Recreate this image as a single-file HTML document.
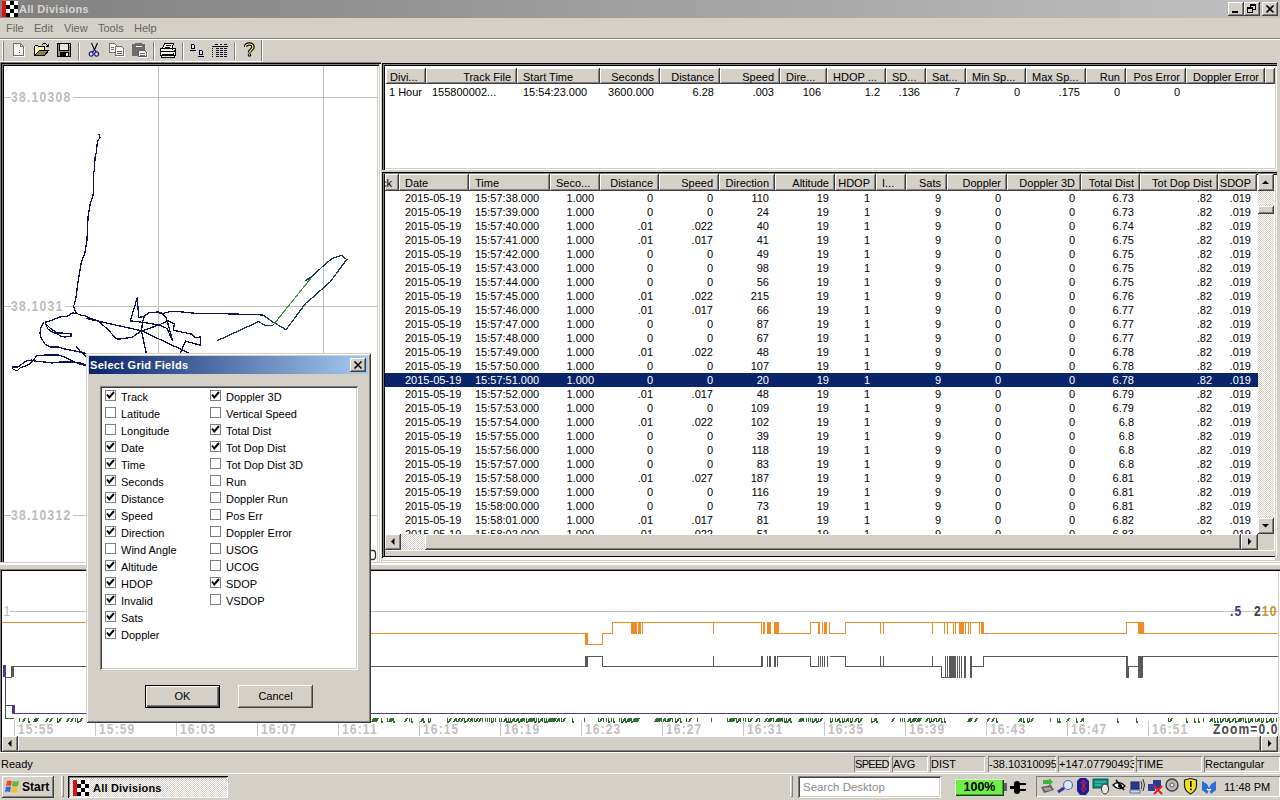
<!DOCTYPE html><html><head><meta charset="utf-8"><style>
html,body{margin:0;padding:0}
body{width:1280px;height:800px;position:relative;overflow:hidden;background:#d4d0c8;font-family:"Liberation Sans",sans-serif;font-size:11px;color:#000}
div{position:absolute;box-sizing:border-box}
.t{white-space:nowrap}
svg{position:absolute}
</style></head><body>
<div style="left:0px;top:0px;width:1280px;height:18px;background:linear-gradient(90deg,#808080,#c0c0c0);"></div>
<div style="left:2px;top:1px;width:4px;height:16px;background:#e01010;"></div>
<div style="left:6px;top:1px;width:4px;height:4px;background:#fff;"></div>
<div style="left:10px;top:1px;width:4px;height:4px;background:#000;"></div>
<div style="left:14px;top:1px;width:4px;height:4px;background:#fff;"></div>
<div style="left:6px;top:5px;width:4px;height:4px;background:#000;"></div>
<div style="left:10px;top:5px;width:4px;height:4px;background:#fff;"></div>
<div style="left:14px;top:5px;width:4px;height:4px;background:#000;"></div>
<div style="left:6px;top:9px;width:4px;height:4px;background:#fff;"></div>
<div style="left:10px;top:9px;width:4px;height:4px;background:#000;"></div>
<div style="left:14px;top:9px;width:4px;height:4px;background:#fff;"></div>
<div style="left:6px;top:13px;width:4px;height:4px;background:#000;"></div>
<div style="left:10px;top:13px;width:4px;height:4px;background:#fff;"></div>
<div style="left:14px;top:13px;width:4px;height:4px;background:#000;"></div>
<div class="t" style="left:19px;top:3px;line-height:13px;font-size:11px;font-weight:bold;color:#d8d4cc;letter-spacing:0.3px;">All Divisions</div>
<div style="left:1228px;top:2px;width:16px;height:14px;background:#d4d0c8;box-shadow:inset -1px -1px #404040,inset 1px 1px #fff,inset -2px -2px #808080;"></div>
<div style="left:1244px;top:2px;width:16px;height:14px;background:#d4d0c8;box-shadow:inset -1px -1px #404040,inset 1px 1px #fff,inset -2px -2px #808080;"></div>
<div style="left:1262px;top:2px;width:16px;height:14px;background:#d4d0c8;box-shadow:inset -1px -1px #404040,inset 1px 1px #fff,inset -2px -2px #808080;"></div>
<div style="left:1232px;top:11px;width:6px;height:2px;background:#000;"></div>
<div style="left:1250px;top:4px;width:6px;height:6px;border:1px solid #000;border-top-width:2px;"></div>
<div style="left:1247px;top:7px;width:6px;height:6px;border:1px solid #000;border-top-width:2px;background:#d4d0c8;"></div>
<svg style="left:1262px;top:2px" width="16" height="14" viewBox="0 0 16 14"><path d="M4.5 3.5 L11.5 10.5 M11.5 3.5 L4.5 10.5" stroke="#000" stroke-width="1.6"/></svg>
<div class="t" style="left:6px;top:22px;line-height:13px;font-size:11px;color:#646464;">File</div>
<div class="t" style="left:34px;top:22px;line-height:13px;font-size:11px;color:#646464;">Edit</div>
<div class="t" style="left:64px;top:22px;line-height:13px;font-size:11px;color:#646464;">View</div>
<div class="t" style="left:98px;top:22px;line-height:13px;font-size:11px;color:#646464;">Tools</div>
<div class="t" style="left:134px;top:22px;line-height:13px;font-size:11px;color:#646464;">Help</div>
<div style="left:0px;top:38px;width:1280px;height:1px;background:#808080;"></div>
<div style="left:0px;top:39px;width:1280px;height:1px;background:#fff;"></div>
<div style="left:2px;top:41px;width:1px;height:20px;background:#fff;"></div>
<div style="left:3px;top:41px;width:1px;height:20px;background:#808080;"></div>
<div style="left:78px;top:42px;width:1px;height:18px;background:#808080;"></div>
<div style="left:79px;top:42px;width:1px;height:18px;background:#fff;"></div>
<div style="left:153px;top:42px;width:1px;height:18px;background:#808080;"></div>
<div style="left:154px;top:42px;width:1px;height:18px;background:#fff;"></div>
<div style="left:182px;top:42px;width:1px;height:18px;background:#808080;"></div>
<div style="left:183px;top:42px;width:1px;height:18px;background:#fff;"></div>
<div style="left:234px;top:42px;width:1px;height:18px;background:#808080;"></div>
<div style="left:235px;top:42px;width:1px;height:18px;background:#fff;"></div>
<div style="left:261px;top:40px;width:1px;height:22px;background:#808080;"></div>
<div style="left:262px;top:40px;width:1px;height:22px;background:#fff;"></div>
<div style="left:0px;top:61px;width:262px;height:1px;background:#fff;"></div>
<svg style="left:0;top:40px" width="270" height="22" viewBox="0 40 270 22" shape-rendering="crispEdges">
<!-- new doc (disabled) -->
<path d="M14.5 44.5 H21.5 L24.5 47.5 V56.5 H14.5 Z" fill="#fff" stroke="#fff"/>
<path d="M13.5 43.5 H20.5 L23.5 46.5 V55.5 H13.5 Z" fill="#f4f4f0" stroke="#707070"/>
<path d="M20.5 43.5 V46.5 H23.5" fill="none" stroke="#707070"/>
<rect x="21" y="45" width="1" height="1" fill="#fff"/>
<rect x="19" y="50" width="1" height="1" fill="#808080"/><rect x="19" y="52" width="1" height="1" fill="#606060"/>
<!-- open folder -->
<path d="M35 47 H44 V50 H39 L35 55 Z" fill="#ffffa8"/>
<path d="M35 47 H37 L35 52 Z" fill="#ffffe8"/>
<path d="M34.5 55.5 V46.5 L35.5 45.5 H37.5 L38.5 46.5 H44.5 V50.5" fill="none" stroke="#000"/>
<path d="M39.5 50.5 H48.5 L44.5 55.5 H34.5 Z" fill="#888048" stroke="#000"/>
<path d="M42.5 45 L43.5 43.5 H45.5 L47 45" fill="none" stroke="#000"/>
<path d="M46 46.5 H49 V43.5 Z" fill="#000"/>
<!-- save -->
<rect x="57.5" y="43.5" width="13" height="13" fill="#909070" stroke="#000"/>
<rect x="60" y="44" width="8" height="6" fill="#e8e8d8"/>
<path d="M59.5 44 V50.5 H68.5 V44" fill="none" stroke="#000"/>
<rect x="60" y="52" width="9" height="4" fill="#000"/>
<rect x="66" y="53" width="2" height="3" fill="#f0f0e8"/>
<rect x="69" y="44" width="1" height="1" fill="#fff"/>
<!-- scissors -->
<g shape-rendering="auto">
<path d="M91.5 43 L94.8 50.5 M97.5 43 L94.2 50.5" stroke="#000" stroke-width="1.1" fill="none"/>
<path d="M94 50.5 L92 52 M95 50.5 L96.5 52" stroke="#000080" stroke-width="1.1" fill="none"/>
<ellipse cx="91.2" cy="54" rx="2" ry="2.2" fill="none" stroke="#1a1a90" stroke-width="1.1"/>
<ellipse cx="96.6" cy="54" rx="2" ry="2.2" fill="none" stroke="#1a1a90" stroke-width="1.1"/>
</g>
<!-- copy disabled -->
<path d="M109.5 43.5 H114.5 L116.5 45.5 V52.5 H109.5 Z" fill="#f8f8f8" stroke="#707070"/>
<path d="M111 47.5 H114 M111 49.5 H114" stroke="#707070"/>
<path d="M115.5 46.5 H121.5 L123.5 48.5 V55.5 H115.5 Z" fill="#f8f8f8" stroke="#707070"/>
<path d="M117 51.5 H122 M117 53.5 H122" stroke="#606060"/>
<path d="M116 56.5 H124.5 V49" fill="none" stroke="#fff"/>
<!-- paste disabled -->
<rect x="132" y="44" width="13" height="12" rx="1" fill="#6c6c6c"/>
<rect x="135" y="43" width="7" height="2" fill="#6c6c6c"/>
<rect x="136" y="46" width="6" height="1" fill="#fff"/>
<path d="M138.5 50.5 H144.5 L146.5 52.5 V56.5 H138.5 Z" fill="#f8f8f8" stroke="#606060"/>
<path d="M140 53.5 H145 M140 55 H145" stroke="#707070"/>
<path d="M139 57.5 H147.5 V52" fill="none" stroke="#fff"/>
<!-- printer -->
<path d="M164.5 43.5 H173.5 L172 48.5 H162.5 Z" fill="#fff" stroke="#000"/>
<path d="M166 45.5 H171 M165 47 H170" stroke="#000"/>
<rect x="160.5" y="48.5" width="15" height="7" fill="#f0eeea" stroke="#000"/>
<path d="M161 51.5 H175 M162 54 H174" stroke="#000"/>
<rect x="161.5" y="55.5" width="13" height="1.5" fill="#e8e8e8" stroke="#000"/>
<rect x="172" y="49" width="1" height="1" fill="#000"/><rect x="174" y="50" width="1" height="1" fill="#000"/><rect x="173" y="53" width="1" height="1" fill="#000"/>
<!-- D_D -->
<path d="M191.5 44.5 H193.5 L194.5 45.5 V48.5 H191.5 Z" fill="#e8e8f0" stroke="#000030"/>
<rect x="190" y="50" width="6" height="1" fill="#000030"/>
<path d="M199.5 50.5 H201.5 L202.5 51.5 V54.5 H199.5 Z" fill="#e8e8f0" stroke="#000030"/>
<rect x="198" y="56" width="6" height="1" fill="#000030"/>
<!-- grid -->
<rect x="215" y="44" width="3" height="1" fill="#101030"/>
<rect x="220" y="44" width="2" height="1" fill="#101030"/>
<rect x="224" y="44" width="3" height="1" fill="#101030"/>
<rect x="212" y="46" width="16" height="1" fill="#101030"/>
<g fill="#101030">
<rect x="212" y="48" width="1" height="1"/><rect x="212" y="50" width="1" height="1"/><rect x="212" y="52" width="1" height="1"/><rect x="212" y="54" width="1" height="1"/><rect x="212" y="56" width="1" height="1"/>
<rect x="216" y="48" width="3" height="1"/><rect x="220" y="48" width="3" height="1"/><rect x="224" y="48" width="3" height="1"/>
<rect x="216" y="50" width="3" height="1"/><rect x="220" y="50" width="3" height="1"/><rect x="224" y="50" width="3" height="1"/>
<rect x="216" y="52" width="3" height="1"/><rect x="220" y="52" width="3" height="1"/><rect x="224" y="52" width="3" height="1"/>
<rect x="216" y="54" width="3" height="1"/><rect x="220" y="54" width="3" height="1"/><rect x="224" y="54" width="3" height="1"/>
<rect x="216" y="56" width="3" height="1"/><rect x="220" y="56" width="3" height="1"/><rect x="224" y="56" width="3" height="1"/>
</g>
<!-- help -->
<g shape-rendering="auto">
<path d="M245.5 47 C245.5 43, 253 43, 253 47 C253 49.5, 249.5 50, 249.5 52.5" fill="none" stroke="#000" stroke-width="3.4"/>
<path d="M245.5 47 C245.5 43, 253 43, 253 47 C253 49.5, 249.5 50, 249.5 52.5" fill="none" stroke="#ffff80" stroke-width="1.2"/>
<circle cx="249.5" cy="55" r="1.8" fill="#000"/>
<circle cx="249.3" cy="54.8" r="0.7" fill="#ffff80"/>
</g>
</svg>
<div style="left:0px;top:62px;width:381px;height:504px;background:#fff;box-shadow:inset 1px 1px #808080,inset 2px 2px #000,inset -1px -1px #fff,inset -2px -2px #d4d0c8;"></div>
<div style="left:2px;top:64px;width:377px;height:500px;box-shadow:inset 1px 1px #808080,inset 2px 2px #000,inset -1px -1px #fff,inset -2px -2px #d4d0c8;"></div>
<svg style="left:4px;top:66px" width="373" height="496" viewBox="4 66 373 496">
<g stroke="#c0c0c0" stroke-width="1" shape-rendering="crispEdges" fill="none">
<line x1="158.5" y1="66" x2="158.5" y2="562"/>
<line x1="323.5" y1="66" x2="323.5" y2="562"/>
<line x1="4" y1="97.5" x2="377" y2="97.5"/>
<line x1="4" y1="306.5" x2="377" y2="306.5"/>
<line x1="4" y1="515.5" x2="377" y2="515.5"/>
</g>
<g fill="none" stroke="#101050" stroke-width="1.3" stroke-linejoin="miter" shape-rendering="crispEdges">
<polyline points="98.75,133.75 100,137.5 97.5,141.25 96.25,152.5 95,157.5 94.5,170 93.25,173.75 93.75,192.5 90,205 88,217.5 87,240 85,252.5 81.25,262.5 80,270 77.5,285 76.5,295 74.5,304 73.5,306 75,311 77,313.5"/>
<polyline points="77,313.5 72,313 68,316 60,317 55,319 50,321 46,322 45.5,324 48,329 52,332 58,334 60,336 65,337 71,336 71,334 62,333 57,333 50,328 46,324"/>
<polyline points="44,322 41,327 40,333 41,338 45,344 50,347 58,347 65,349 75,351 80,352 85,353 87,355"/>
<polyline points="76,346 80,351 87,357"/>
<polyline points="12,367 13,369 17,371 20,368 28,365 33,361 35,358 36,356 45,355 58,355 65,357 72,361 80,364 87,366"/>
<polyline points="12,367 18,367 22,364 26,361 32,360 34,361 45,362 52,363 60,362 72,362 80,363 87,365"/>
<polyline points="77,313.5 80,315 86,316 90,318.1 98.4,321 108.7,330.3 115.3,337.8 118.1,339.2 132.2,337.3 138.7,332.6 141.5,331.2"/>
<polyline points="86,318.5 141.5,330.8 188.4,352.8"/>
<polyline points="130.3,320.9 137.3,297.5 138.7,317.6 144.4,316.2 149,312.5 158.4,312 163.1,313.4 169.7,311.6 179,311.6 195.9,313.4 210,313.4 249,314.4 263,315"/>
<polyline points="130.3,320.9 142.5,322.3 159.4,325.1 166.9,328.4 172.5,340.6 166.9,320 174.3,323.7 173.4,330.3 191.2,334 195.9,337.8 200.6,336.9 200.6,345.3 185.6,341.1 180.4,352.8"/>
<polyline points="144.4,316.2 142.5,321.9 141.5,331.2 146.2,352.8"/>
<polyline points="141.5,331.2 159.4,324.7 165.9,321.9 166.9,318.1 163.1,314.4 158.4,312.5"/>
</g>
<polyline points="217.5,340.6 258.6,321.6 265,325.3 272.8,325.3 274.5,323.5" fill="none" stroke="#1e3a52" stroke-width="1.3" shape-rendering="crispEdges"/>
<polyline points="263,315 272.8,322 286,329.7 305.6,303.4 313.3,296.9 330,282 345,261.9 346.8,259.7 341.7,255.3 331.9,258.6 325.3,264 310,278.3 305.6,280.5" fill="none" stroke="#1e3a52" stroke-width="1.3" shape-rendering="crispEdges"/>
<polyline points="274,324 311,278" fill="none" stroke="#3a9a3a" stroke-width="1.2" shape-rendering="crispEdges"/>
<polyline points="305.5,280.5 309,278 313.5,276.5 M309,280" fill="none" stroke="#1e3a52" stroke-width="1.2" shape-rendering="crispEdges"/>
</svg>
<div class="t" style="left:11px;top:90px;line-height:14px;font-size:14px;font-weight:bold;color:#bcbcbc;background:#fff;letter-spacing:1.5px;transform:scaleX(0.86);transform-origin:0 0;padding-right:2px;">38.10308</div>
<div class="t" style="left:11px;top:299px;line-height:14px;font-size:14px;font-weight:bold;color:#bcbcbc;background:#fff;letter-spacing:1.5px;transform:scaleX(0.86);transform-origin:0 0;padding-right:2px;">38.1031</div>
<div class="t" style="left:11px;top:508px;line-height:14px;font-size:14px;font-weight:bold;color:#bcbcbc;background:#fff;letter-spacing:1.5px;transform:scaleX(0.86);transform-origin:0 0;padding-right:2px;">38.10312</div>
<div style="left:382px;top:62px;width:898px;height:508px;background:#d4d0c8;"></div>
<div style="left:382px;top:63px;width:895px;height:107px;background:#fff;box-shadow:inset 1px 1px #000,inset 2px 2px #808080,inset 3px 3px #000,inset -1px -1px #fff,inset -2px -2px #d4d0c8;"></div>
<div style="left:386px;top:68px;width:40px;height:16px;background:#d4d0c8;box-shadow:inset -1px -1px #404040,inset 1px 1px #fff,inset -2px -2px #808080;"></div>
<div class="t" style="left:390px;top:71px;line-height:13px;font-size:11px;">Divi...</div>
<div class="t" style="left:389px;top:86px;line-height:13px;font-size:11px;">1 Hour</div>
<div style="left:426px;top:68px;width:91px;height:16px;background:#d4d0c8;box-shadow:inset -1px -1px #404040,inset 1px 1px #fff,inset -2px -2px #808080;"></div>
<div class="t" style="left:311px;top:71px;width:200px;text-align:right;line-height:13px;font-size:11px;">Track File</div>
<div class="t" style="left:432px;top:86px;line-height:13px;font-size:11px;">155800002...</div>
<div style="left:517px;top:68px;width:83px;height:16px;background:#d4d0c8;box-shadow:inset -1px -1px #404040,inset 1px 1px #fff,inset -2px -2px #808080;"></div>
<div class="t" style="left:523px;top:71px;line-height:13px;font-size:11px;">Start Time</div>
<div class="t" style="left:523px;top:86px;line-height:13px;font-size:11px;">15:54:23.000</div>
<div style="left:600px;top:68px;width:60px;height:16px;background:#d4d0c8;box-shadow:inset -1px -1px #404040,inset 1px 1px #fff,inset -2px -2px #808080;"></div>
<div class="t" style="left:454px;top:71px;width:200px;text-align:right;line-height:13px;font-size:11px;">Seconds</div>
<div class="t" style="left:454px;top:86px;width:200px;text-align:right;line-height:13px;font-size:11px;">3600.000</div>
<div style="left:660px;top:68px;width:60px;height:16px;background:#d4d0c8;box-shadow:inset -1px -1px #404040,inset 1px 1px #fff,inset -2px -2px #808080;"></div>
<div class="t" style="left:514px;top:71px;width:200px;text-align:right;line-height:13px;font-size:11px;">Distance</div>
<div class="t" style="left:514px;top:86px;width:200px;text-align:right;line-height:13px;font-size:11px;">6.28</div>
<div style="left:720px;top:68px;width:60px;height:16px;background:#d4d0c8;box-shadow:inset -1px -1px #404040,inset 1px 1px #fff,inset -2px -2px #808080;"></div>
<div class="t" style="left:574px;top:71px;width:200px;text-align:right;line-height:13px;font-size:11px;">Speed</div>
<div class="t" style="left:574px;top:86px;width:200px;text-align:right;line-height:13px;font-size:11px;">.003</div>
<div style="left:780px;top:68px;width:47px;height:16px;background:#d4d0c8;box-shadow:inset -1px -1px #404040,inset 1px 1px #fff,inset -2px -2px #808080;"></div>
<div class="t" style="left:786px;top:71px;line-height:13px;font-size:11px;">Dire...</div>
<div class="t" style="left:621px;top:86px;width:200px;text-align:right;line-height:13px;font-size:11px;">106</div>
<div style="left:827px;top:68px;width:59px;height:16px;background:#d4d0c8;box-shadow:inset -1px -1px #404040,inset 1px 1px #fff,inset -2px -2px #808080;"></div>
<div class="t" style="left:833px;top:71px;line-height:13px;font-size:11px;">HDOP ...</div>
<div class="t" style="left:680px;top:86px;width:200px;text-align:right;line-height:13px;font-size:11px;">1.2</div>
<div style="left:886px;top:68px;width:40px;height:16px;background:#d4d0c8;box-shadow:inset -1px -1px #404040,inset 1px 1px #fff,inset -2px -2px #808080;"></div>
<div class="t" style="left:892px;top:71px;line-height:13px;font-size:11px;">SD...</div>
<div class="t" style="left:720px;top:86px;width:200px;text-align:right;line-height:13px;font-size:11px;">.136</div>
<div style="left:926px;top:68px;width:40px;height:16px;background:#d4d0c8;box-shadow:inset -1px -1px #404040,inset 1px 1px #fff,inset -2px -2px #808080;"></div>
<div class="t" style="left:932px;top:71px;line-height:13px;font-size:11px;">Sat...</div>
<div class="t" style="left:760px;top:86px;width:200px;text-align:right;line-height:13px;font-size:11px;">7</div>
<div style="left:966px;top:68px;width:60px;height:16px;background:#d4d0c8;box-shadow:inset -1px -1px #404040,inset 1px 1px #fff,inset -2px -2px #808080;"></div>
<div class="t" style="left:972px;top:71px;line-height:13px;font-size:11px;">Min Sp...</div>
<div class="t" style="left:820px;top:86px;width:200px;text-align:right;line-height:13px;font-size:11px;">0</div>
<div style="left:1026px;top:68px;width:60px;height:16px;background:#d4d0c8;box-shadow:inset -1px -1px #404040,inset 1px 1px #fff,inset -2px -2px #808080;"></div>
<div class="t" style="left:1032px;top:71px;line-height:13px;font-size:11px;">Max Sp...</div>
<div class="t" style="left:880px;top:86px;width:200px;text-align:right;line-height:13px;font-size:11px;">.175</div>
<div style="left:1086px;top:68px;width:40px;height:16px;background:#d4d0c8;box-shadow:inset -1px -1px #404040,inset 1px 1px #fff,inset -2px -2px #808080;"></div>
<div class="t" style="left:920px;top:71px;width:200px;text-align:right;line-height:13px;font-size:11px;">Run</div>
<div class="t" style="left:920px;top:86px;width:200px;text-align:right;line-height:13px;font-size:11px;">0</div>
<div style="left:1126px;top:68px;width:60px;height:16px;background:#d4d0c8;box-shadow:inset -1px -1px #404040,inset 1px 1px #fff,inset -2px -2px #808080;"></div>
<div class="t" style="left:980px;top:71px;width:200px;text-align:right;line-height:13px;font-size:11px;">Pos Error</div>
<div class="t" style="left:980px;top:86px;width:200px;text-align:right;line-height:13px;font-size:11px;">0</div>
<div style="left:1186px;top:68px;width:79px;height:16px;background:#d4d0c8;box-shadow:inset -1px -1px #404040,inset 1px 1px #fff,inset -2px -2px #808080;"></div>
<div class="t" style="left:1059px;top:71px;width:200px;text-align:right;line-height:13px;font-size:11px;">Doppler Error</div>
<div style="left:1265px;top:68px;width:10px;height:16px;background:#d4d0c8;box-shadow:inset -1px -1px #404040,inset 1px 1px #fff,inset -2px -2px #808080;"></div>
<div style="left:382px;top:172px;width:895px;height:386px;background:#fff;box-shadow:inset 1px 1px #000,inset 2px 2px #808080,inset 3px 3px #000,inset -1px -1px #fff,inset -2px -2px #d4d0c8;"></div>
<div style="left:385px;top:174px;width:873px;height:360px;overflow:hidden">
<div style="left:0px;top:0;width:14px;height:17px;background:#d4d0c8;box-shadow:inset -1px -1px #404040,inset 1px 1px #fff,inset -2px -2px #808080;"></div>
<div style="left:0;top:0;width:13px;height:16px;overflow:hidden"><div class="t" style="left:-60px;top:3px;width:67px;text-align:right;line-height:13px">Track</div></div>
<div style="left:14px;top:0;width:70px;height:17px;background:#d4d0c8;box-shadow:inset -1px -1px #404040,inset 1px 1px #fff,inset -2px -2px #808080;"></div>
<div class="t" style="left:20px;top:3px;line-height:13px">Date</div>
<div style="left:84px;top:0;width:81px;height:17px;background:#d4d0c8;box-shadow:inset -1px -1px #404040,inset 1px 1px #fff,inset -2px -2px #808080;"></div>
<div class="t" style="left:90px;top:3px;line-height:13px">Time</div>
<div style="left:165px;top:0;width:50px;height:17px;background:#d4d0c8;box-shadow:inset -1px -1px #404040,inset 1px 1px #fff,inset -2px -2px #808080;"></div>
<div class="t" style="left:171px;top:3px;line-height:13px">Seco...</div>
<div style="left:215px;top:0;width:59px;height:17px;background:#d4d0c8;box-shadow:inset -1px -1px #404040,inset 1px 1px #fff,inset -2px -2px #808080;"></div>
<div class="t" style="left:215px;top:3px;width:53px;text-align:right;line-height:13px;overflow:hidden">Distance</div>
<div style="left:274px;top:0;width:60px;height:17px;background:#d4d0c8;box-shadow:inset -1px -1px #404040,inset 1px 1px #fff,inset -2px -2px #808080;"></div>
<div class="t" style="left:274px;top:3px;width:54px;text-align:right;line-height:13px;overflow:hidden">Speed</div>
<div style="left:334px;top:0;width:56px;height:17px;background:#d4d0c8;box-shadow:inset -1px -1px #404040,inset 1px 1px #fff,inset -2px -2px #808080;"></div>
<div class="t" style="left:334px;top:3px;width:50px;text-align:right;line-height:13px;overflow:hidden">Direction</div>
<div style="left:390px;top:0;width:60px;height:17px;background:#d4d0c8;box-shadow:inset -1px -1px #404040,inset 1px 1px #fff,inset -2px -2px #808080;"></div>
<div class="t" style="left:390px;top:3px;width:54px;text-align:right;line-height:13px;overflow:hidden">Altitude</div>
<div style="left:450px;top:0;width:41px;height:17px;background:#d4d0c8;box-shadow:inset -1px -1px #404040,inset 1px 1px #fff,inset -2px -2px #808080;"></div>
<div class="t" style="left:450px;top:3px;width:35px;text-align:right;line-height:13px;overflow:hidden">HDOP</div>
<div style="left:491px;top:0;width:30px;height:17px;background:#d4d0c8;box-shadow:inset -1px -1px #404040,inset 1px 1px #fff,inset -2px -2px #808080;"></div>
<div class="t" style="left:497px;top:3px;line-height:13px">I...</div>
<div style="left:521px;top:0;width:41px;height:17px;background:#d4d0c8;box-shadow:inset -1px -1px #404040,inset 1px 1px #fff,inset -2px -2px #808080;"></div>
<div class="t" style="left:521px;top:3px;width:35px;text-align:right;line-height:13px;overflow:hidden">Sats</div>
<div style="left:562px;top:0;width:60px;height:17px;background:#d4d0c8;box-shadow:inset -1px -1px #404040,inset 1px 1px #fff,inset -2px -2px #808080;"></div>
<div class="t" style="left:562px;top:3px;width:54px;text-align:right;line-height:13px;overflow:hidden">Doppler</div>
<div style="left:622px;top:0;width:74px;height:17px;background:#d4d0c8;box-shadow:inset -1px -1px #404040,inset 1px 1px #fff,inset -2px -2px #808080;"></div>
<div class="t" style="left:622px;top:3px;width:68px;text-align:right;line-height:13px;overflow:hidden">Doppler 3D</div>
<div style="left:696px;top:0;width:59px;height:17px;background:#d4d0c8;box-shadow:inset -1px -1px #404040,inset 1px 1px #fff,inset -2px -2px #808080;"></div>
<div class="t" style="left:696px;top:3px;width:53px;text-align:right;line-height:13px;overflow:hidden">Total Dist</div>
<div style="left:755px;top:0;width:78px;height:17px;background:#d4d0c8;box-shadow:inset -1px -1px #404040,inset 1px 1px #fff,inset -2px -2px #808080;"></div>
<div class="t" style="left:755px;top:3px;width:72px;text-align:right;line-height:13px;overflow:hidden">Tot Dop Dist</div>
<div style="left:833px;top:0;width:39px;height:17px;background:#d4d0c8;box-shadow:inset -1px -1px #404040,inset 1px 1px #fff,inset -2px -2px #808080;"></div>
<div class="t" style="left:833px;top:3px;width:33px;text-align:right;line-height:13px;overflow:hidden">SDOP</div>
<div class="t" style="left:20px;top:17px;line-height:14px;color:#000">2015-05-19</div>
<div class="t" style="left:90px;top:17px;line-height:14px;color:#000">15:57:38.000</div>
<div class="t" style="left:109px;top:17px;width:100px;text-align:right;line-height:14px;color:#000">1.000</div>
<div class="t" style="left:168px;top:17px;width:100px;text-align:right;line-height:14px;color:#000">0</div>
<div class="t" style="left:228px;top:17px;width:100px;text-align:right;line-height:14px;color:#000">0</div>
<div class="t" style="left:284px;top:17px;width:100px;text-align:right;line-height:14px;color:#000">110</div>
<div class="t" style="left:344px;top:17px;width:100px;text-align:right;line-height:14px;color:#000">19</div>
<div class="t" style="left:385px;top:17px;width:100px;text-align:right;line-height:14px;color:#000">1</div>
<div class="t" style="left:456px;top:17px;width:100px;text-align:right;line-height:14px;color:#000">9</div>
<div class="t" style="left:516px;top:17px;width:100px;text-align:right;line-height:14px;color:#000">0</div>
<div class="t" style="left:590px;top:17px;width:100px;text-align:right;line-height:14px;color:#000">0</div>
<div class="t" style="left:649px;top:17px;width:100px;text-align:right;line-height:14px;color:#000">6.73</div>
<div class="t" style="left:727px;top:17px;width:100px;text-align:right;line-height:14px;color:#000">.82</div>
<div class="t" style="left:766px;top:17px;width:100px;text-align:right;line-height:14px;color:#000">.019</div>
<div class="t" style="left:20px;top:31px;line-height:14px;color:#000">2015-05-19</div>
<div class="t" style="left:90px;top:31px;line-height:14px;color:#000">15:57:39.000</div>
<div class="t" style="left:109px;top:31px;width:100px;text-align:right;line-height:14px;color:#000">1.000</div>
<div class="t" style="left:168px;top:31px;width:100px;text-align:right;line-height:14px;color:#000">0</div>
<div class="t" style="left:228px;top:31px;width:100px;text-align:right;line-height:14px;color:#000">0</div>
<div class="t" style="left:284px;top:31px;width:100px;text-align:right;line-height:14px;color:#000">24</div>
<div class="t" style="left:344px;top:31px;width:100px;text-align:right;line-height:14px;color:#000">19</div>
<div class="t" style="left:385px;top:31px;width:100px;text-align:right;line-height:14px;color:#000">1</div>
<div class="t" style="left:456px;top:31px;width:100px;text-align:right;line-height:14px;color:#000">9</div>
<div class="t" style="left:516px;top:31px;width:100px;text-align:right;line-height:14px;color:#000">0</div>
<div class="t" style="left:590px;top:31px;width:100px;text-align:right;line-height:14px;color:#000">0</div>
<div class="t" style="left:649px;top:31px;width:100px;text-align:right;line-height:14px;color:#000">6.73</div>
<div class="t" style="left:727px;top:31px;width:100px;text-align:right;line-height:14px;color:#000">.82</div>
<div class="t" style="left:766px;top:31px;width:100px;text-align:right;line-height:14px;color:#000">.019</div>
<div class="t" style="left:20px;top:45px;line-height:14px;color:#000">2015-05-19</div>
<div class="t" style="left:90px;top:45px;line-height:14px;color:#000">15:57:40.000</div>
<div class="t" style="left:109px;top:45px;width:100px;text-align:right;line-height:14px;color:#000">1.000</div>
<div class="t" style="left:168px;top:45px;width:100px;text-align:right;line-height:14px;color:#000">.01</div>
<div class="t" style="left:228px;top:45px;width:100px;text-align:right;line-height:14px;color:#000">.022</div>
<div class="t" style="left:284px;top:45px;width:100px;text-align:right;line-height:14px;color:#000">40</div>
<div class="t" style="left:344px;top:45px;width:100px;text-align:right;line-height:14px;color:#000">19</div>
<div class="t" style="left:385px;top:45px;width:100px;text-align:right;line-height:14px;color:#000">1</div>
<div class="t" style="left:456px;top:45px;width:100px;text-align:right;line-height:14px;color:#000">9</div>
<div class="t" style="left:516px;top:45px;width:100px;text-align:right;line-height:14px;color:#000">0</div>
<div class="t" style="left:590px;top:45px;width:100px;text-align:right;line-height:14px;color:#000">0</div>
<div class="t" style="left:649px;top:45px;width:100px;text-align:right;line-height:14px;color:#000">6.74</div>
<div class="t" style="left:727px;top:45px;width:100px;text-align:right;line-height:14px;color:#000">.82</div>
<div class="t" style="left:766px;top:45px;width:100px;text-align:right;line-height:14px;color:#000">.019</div>
<div class="t" style="left:20px;top:59px;line-height:14px;color:#000">2015-05-19</div>
<div class="t" style="left:90px;top:59px;line-height:14px;color:#000">15:57:41.000</div>
<div class="t" style="left:109px;top:59px;width:100px;text-align:right;line-height:14px;color:#000">1.000</div>
<div class="t" style="left:168px;top:59px;width:100px;text-align:right;line-height:14px;color:#000">.01</div>
<div class="t" style="left:228px;top:59px;width:100px;text-align:right;line-height:14px;color:#000">.017</div>
<div class="t" style="left:284px;top:59px;width:100px;text-align:right;line-height:14px;color:#000">41</div>
<div class="t" style="left:344px;top:59px;width:100px;text-align:right;line-height:14px;color:#000">19</div>
<div class="t" style="left:385px;top:59px;width:100px;text-align:right;line-height:14px;color:#000">1</div>
<div class="t" style="left:456px;top:59px;width:100px;text-align:right;line-height:14px;color:#000">9</div>
<div class="t" style="left:516px;top:59px;width:100px;text-align:right;line-height:14px;color:#000">0</div>
<div class="t" style="left:590px;top:59px;width:100px;text-align:right;line-height:14px;color:#000">0</div>
<div class="t" style="left:649px;top:59px;width:100px;text-align:right;line-height:14px;color:#000">6.75</div>
<div class="t" style="left:727px;top:59px;width:100px;text-align:right;line-height:14px;color:#000">.82</div>
<div class="t" style="left:766px;top:59px;width:100px;text-align:right;line-height:14px;color:#000">.019</div>
<div class="t" style="left:20px;top:73px;line-height:14px;color:#000">2015-05-19</div>
<div class="t" style="left:90px;top:73px;line-height:14px;color:#000">15:57:42.000</div>
<div class="t" style="left:109px;top:73px;width:100px;text-align:right;line-height:14px;color:#000">1.000</div>
<div class="t" style="left:168px;top:73px;width:100px;text-align:right;line-height:14px;color:#000">0</div>
<div class="t" style="left:228px;top:73px;width:100px;text-align:right;line-height:14px;color:#000">0</div>
<div class="t" style="left:284px;top:73px;width:100px;text-align:right;line-height:14px;color:#000">49</div>
<div class="t" style="left:344px;top:73px;width:100px;text-align:right;line-height:14px;color:#000">19</div>
<div class="t" style="left:385px;top:73px;width:100px;text-align:right;line-height:14px;color:#000">1</div>
<div class="t" style="left:456px;top:73px;width:100px;text-align:right;line-height:14px;color:#000">9</div>
<div class="t" style="left:516px;top:73px;width:100px;text-align:right;line-height:14px;color:#000">0</div>
<div class="t" style="left:590px;top:73px;width:100px;text-align:right;line-height:14px;color:#000">0</div>
<div class="t" style="left:649px;top:73px;width:100px;text-align:right;line-height:14px;color:#000">6.75</div>
<div class="t" style="left:727px;top:73px;width:100px;text-align:right;line-height:14px;color:#000">.82</div>
<div class="t" style="left:766px;top:73px;width:100px;text-align:right;line-height:14px;color:#000">.019</div>
<div class="t" style="left:20px;top:87px;line-height:14px;color:#000">2015-05-19</div>
<div class="t" style="left:90px;top:87px;line-height:14px;color:#000">15:57:43.000</div>
<div class="t" style="left:109px;top:87px;width:100px;text-align:right;line-height:14px;color:#000">1.000</div>
<div class="t" style="left:168px;top:87px;width:100px;text-align:right;line-height:14px;color:#000">0</div>
<div class="t" style="left:228px;top:87px;width:100px;text-align:right;line-height:14px;color:#000">0</div>
<div class="t" style="left:284px;top:87px;width:100px;text-align:right;line-height:14px;color:#000">98</div>
<div class="t" style="left:344px;top:87px;width:100px;text-align:right;line-height:14px;color:#000">19</div>
<div class="t" style="left:385px;top:87px;width:100px;text-align:right;line-height:14px;color:#000">1</div>
<div class="t" style="left:456px;top:87px;width:100px;text-align:right;line-height:14px;color:#000">9</div>
<div class="t" style="left:516px;top:87px;width:100px;text-align:right;line-height:14px;color:#000">0</div>
<div class="t" style="left:590px;top:87px;width:100px;text-align:right;line-height:14px;color:#000">0</div>
<div class="t" style="left:649px;top:87px;width:100px;text-align:right;line-height:14px;color:#000">6.75</div>
<div class="t" style="left:727px;top:87px;width:100px;text-align:right;line-height:14px;color:#000">.82</div>
<div class="t" style="left:766px;top:87px;width:100px;text-align:right;line-height:14px;color:#000">.019</div>
<div class="t" style="left:20px;top:101px;line-height:14px;color:#000">2015-05-19</div>
<div class="t" style="left:90px;top:101px;line-height:14px;color:#000">15:57:44.000</div>
<div class="t" style="left:109px;top:101px;width:100px;text-align:right;line-height:14px;color:#000">1.000</div>
<div class="t" style="left:168px;top:101px;width:100px;text-align:right;line-height:14px;color:#000">0</div>
<div class="t" style="left:228px;top:101px;width:100px;text-align:right;line-height:14px;color:#000">0</div>
<div class="t" style="left:284px;top:101px;width:100px;text-align:right;line-height:14px;color:#000">56</div>
<div class="t" style="left:344px;top:101px;width:100px;text-align:right;line-height:14px;color:#000">19</div>
<div class="t" style="left:385px;top:101px;width:100px;text-align:right;line-height:14px;color:#000">1</div>
<div class="t" style="left:456px;top:101px;width:100px;text-align:right;line-height:14px;color:#000">9</div>
<div class="t" style="left:516px;top:101px;width:100px;text-align:right;line-height:14px;color:#000">0</div>
<div class="t" style="left:590px;top:101px;width:100px;text-align:right;line-height:14px;color:#000">0</div>
<div class="t" style="left:649px;top:101px;width:100px;text-align:right;line-height:14px;color:#000">6.75</div>
<div class="t" style="left:727px;top:101px;width:100px;text-align:right;line-height:14px;color:#000">.82</div>
<div class="t" style="left:766px;top:101px;width:100px;text-align:right;line-height:14px;color:#000">.019</div>
<div class="t" style="left:20px;top:115px;line-height:14px;color:#000">2015-05-19</div>
<div class="t" style="left:90px;top:115px;line-height:14px;color:#000">15:57:45.000</div>
<div class="t" style="left:109px;top:115px;width:100px;text-align:right;line-height:14px;color:#000">1.000</div>
<div class="t" style="left:168px;top:115px;width:100px;text-align:right;line-height:14px;color:#000">.01</div>
<div class="t" style="left:228px;top:115px;width:100px;text-align:right;line-height:14px;color:#000">.022</div>
<div class="t" style="left:284px;top:115px;width:100px;text-align:right;line-height:14px;color:#000">215</div>
<div class="t" style="left:344px;top:115px;width:100px;text-align:right;line-height:14px;color:#000">19</div>
<div class="t" style="left:385px;top:115px;width:100px;text-align:right;line-height:14px;color:#000">1</div>
<div class="t" style="left:456px;top:115px;width:100px;text-align:right;line-height:14px;color:#000">9</div>
<div class="t" style="left:516px;top:115px;width:100px;text-align:right;line-height:14px;color:#000">0</div>
<div class="t" style="left:590px;top:115px;width:100px;text-align:right;line-height:14px;color:#000">0</div>
<div class="t" style="left:649px;top:115px;width:100px;text-align:right;line-height:14px;color:#000">6.76</div>
<div class="t" style="left:727px;top:115px;width:100px;text-align:right;line-height:14px;color:#000">.82</div>
<div class="t" style="left:766px;top:115px;width:100px;text-align:right;line-height:14px;color:#000">.019</div>
<div class="t" style="left:20px;top:129px;line-height:14px;color:#000">2015-05-19</div>
<div class="t" style="left:90px;top:129px;line-height:14px;color:#000">15:57:46.000</div>
<div class="t" style="left:109px;top:129px;width:100px;text-align:right;line-height:14px;color:#000">1.000</div>
<div class="t" style="left:168px;top:129px;width:100px;text-align:right;line-height:14px;color:#000">.01</div>
<div class="t" style="left:228px;top:129px;width:100px;text-align:right;line-height:14px;color:#000">.017</div>
<div class="t" style="left:284px;top:129px;width:100px;text-align:right;line-height:14px;color:#000">66</div>
<div class="t" style="left:344px;top:129px;width:100px;text-align:right;line-height:14px;color:#000">19</div>
<div class="t" style="left:385px;top:129px;width:100px;text-align:right;line-height:14px;color:#000">1</div>
<div class="t" style="left:456px;top:129px;width:100px;text-align:right;line-height:14px;color:#000">9</div>
<div class="t" style="left:516px;top:129px;width:100px;text-align:right;line-height:14px;color:#000">0</div>
<div class="t" style="left:590px;top:129px;width:100px;text-align:right;line-height:14px;color:#000">0</div>
<div class="t" style="left:649px;top:129px;width:100px;text-align:right;line-height:14px;color:#000">6.77</div>
<div class="t" style="left:727px;top:129px;width:100px;text-align:right;line-height:14px;color:#000">.82</div>
<div class="t" style="left:766px;top:129px;width:100px;text-align:right;line-height:14px;color:#000">.019</div>
<div class="t" style="left:20px;top:143px;line-height:14px;color:#000">2015-05-19</div>
<div class="t" style="left:90px;top:143px;line-height:14px;color:#000">15:57:47.000</div>
<div class="t" style="left:109px;top:143px;width:100px;text-align:right;line-height:14px;color:#000">1.000</div>
<div class="t" style="left:168px;top:143px;width:100px;text-align:right;line-height:14px;color:#000">0</div>
<div class="t" style="left:228px;top:143px;width:100px;text-align:right;line-height:14px;color:#000">0</div>
<div class="t" style="left:284px;top:143px;width:100px;text-align:right;line-height:14px;color:#000">87</div>
<div class="t" style="left:344px;top:143px;width:100px;text-align:right;line-height:14px;color:#000">19</div>
<div class="t" style="left:385px;top:143px;width:100px;text-align:right;line-height:14px;color:#000">1</div>
<div class="t" style="left:456px;top:143px;width:100px;text-align:right;line-height:14px;color:#000">9</div>
<div class="t" style="left:516px;top:143px;width:100px;text-align:right;line-height:14px;color:#000">0</div>
<div class="t" style="left:590px;top:143px;width:100px;text-align:right;line-height:14px;color:#000">0</div>
<div class="t" style="left:649px;top:143px;width:100px;text-align:right;line-height:14px;color:#000">6.77</div>
<div class="t" style="left:727px;top:143px;width:100px;text-align:right;line-height:14px;color:#000">.82</div>
<div class="t" style="left:766px;top:143px;width:100px;text-align:right;line-height:14px;color:#000">.019</div>
<div class="t" style="left:20px;top:157px;line-height:14px;color:#000">2015-05-19</div>
<div class="t" style="left:90px;top:157px;line-height:14px;color:#000">15:57:48.000</div>
<div class="t" style="left:109px;top:157px;width:100px;text-align:right;line-height:14px;color:#000">1.000</div>
<div class="t" style="left:168px;top:157px;width:100px;text-align:right;line-height:14px;color:#000">0</div>
<div class="t" style="left:228px;top:157px;width:100px;text-align:right;line-height:14px;color:#000">0</div>
<div class="t" style="left:284px;top:157px;width:100px;text-align:right;line-height:14px;color:#000">67</div>
<div class="t" style="left:344px;top:157px;width:100px;text-align:right;line-height:14px;color:#000">19</div>
<div class="t" style="left:385px;top:157px;width:100px;text-align:right;line-height:14px;color:#000">1</div>
<div class="t" style="left:456px;top:157px;width:100px;text-align:right;line-height:14px;color:#000">9</div>
<div class="t" style="left:516px;top:157px;width:100px;text-align:right;line-height:14px;color:#000">0</div>
<div class="t" style="left:590px;top:157px;width:100px;text-align:right;line-height:14px;color:#000">0</div>
<div class="t" style="left:649px;top:157px;width:100px;text-align:right;line-height:14px;color:#000">6.77</div>
<div class="t" style="left:727px;top:157px;width:100px;text-align:right;line-height:14px;color:#000">.82</div>
<div class="t" style="left:766px;top:157px;width:100px;text-align:right;line-height:14px;color:#000">.019</div>
<div class="t" style="left:20px;top:171px;line-height:14px;color:#000">2015-05-19</div>
<div class="t" style="left:90px;top:171px;line-height:14px;color:#000">15:57:49.000</div>
<div class="t" style="left:109px;top:171px;width:100px;text-align:right;line-height:14px;color:#000">1.000</div>
<div class="t" style="left:168px;top:171px;width:100px;text-align:right;line-height:14px;color:#000">.01</div>
<div class="t" style="left:228px;top:171px;width:100px;text-align:right;line-height:14px;color:#000">.022</div>
<div class="t" style="left:284px;top:171px;width:100px;text-align:right;line-height:14px;color:#000">48</div>
<div class="t" style="left:344px;top:171px;width:100px;text-align:right;line-height:14px;color:#000">19</div>
<div class="t" style="left:385px;top:171px;width:100px;text-align:right;line-height:14px;color:#000">1</div>
<div class="t" style="left:456px;top:171px;width:100px;text-align:right;line-height:14px;color:#000">9</div>
<div class="t" style="left:516px;top:171px;width:100px;text-align:right;line-height:14px;color:#000">0</div>
<div class="t" style="left:590px;top:171px;width:100px;text-align:right;line-height:14px;color:#000">0</div>
<div class="t" style="left:649px;top:171px;width:100px;text-align:right;line-height:14px;color:#000">6.78</div>
<div class="t" style="left:727px;top:171px;width:100px;text-align:right;line-height:14px;color:#000">.82</div>
<div class="t" style="left:766px;top:171px;width:100px;text-align:right;line-height:14px;color:#000">.019</div>
<div class="t" style="left:20px;top:185px;line-height:14px;color:#000">2015-05-19</div>
<div class="t" style="left:90px;top:185px;line-height:14px;color:#000">15:57:50.000</div>
<div class="t" style="left:109px;top:185px;width:100px;text-align:right;line-height:14px;color:#000">1.000</div>
<div class="t" style="left:168px;top:185px;width:100px;text-align:right;line-height:14px;color:#000">0</div>
<div class="t" style="left:228px;top:185px;width:100px;text-align:right;line-height:14px;color:#000">0</div>
<div class="t" style="left:284px;top:185px;width:100px;text-align:right;line-height:14px;color:#000">107</div>
<div class="t" style="left:344px;top:185px;width:100px;text-align:right;line-height:14px;color:#000">19</div>
<div class="t" style="left:385px;top:185px;width:100px;text-align:right;line-height:14px;color:#000">1</div>
<div class="t" style="left:456px;top:185px;width:100px;text-align:right;line-height:14px;color:#000">9</div>
<div class="t" style="left:516px;top:185px;width:100px;text-align:right;line-height:14px;color:#000">0</div>
<div class="t" style="left:590px;top:185px;width:100px;text-align:right;line-height:14px;color:#000">0</div>
<div class="t" style="left:649px;top:185px;width:100px;text-align:right;line-height:14px;color:#000">6.78</div>
<div class="t" style="left:727px;top:185px;width:100px;text-align:right;line-height:14px;color:#000">.82</div>
<div class="t" style="left:766px;top:185px;width:100px;text-align:right;line-height:14px;color:#000">.019</div>
<div style="left:0;top:199px;width:873px;height:14px;background:#0a246a"></div>
<div class="t" style="left:20px;top:199px;line-height:14px;color:#fff">2015-05-19</div>
<div class="t" style="left:90px;top:199px;line-height:14px;color:#fff">15:57:51.000</div>
<div class="t" style="left:109px;top:199px;width:100px;text-align:right;line-height:14px;color:#fff">1.000</div>
<div class="t" style="left:168px;top:199px;width:100px;text-align:right;line-height:14px;color:#fff">0</div>
<div class="t" style="left:228px;top:199px;width:100px;text-align:right;line-height:14px;color:#fff">0</div>
<div class="t" style="left:284px;top:199px;width:100px;text-align:right;line-height:14px;color:#fff">20</div>
<div class="t" style="left:344px;top:199px;width:100px;text-align:right;line-height:14px;color:#fff">19</div>
<div class="t" style="left:385px;top:199px;width:100px;text-align:right;line-height:14px;color:#fff">1</div>
<div class="t" style="left:456px;top:199px;width:100px;text-align:right;line-height:14px;color:#fff">9</div>
<div class="t" style="left:516px;top:199px;width:100px;text-align:right;line-height:14px;color:#fff">0</div>
<div class="t" style="left:590px;top:199px;width:100px;text-align:right;line-height:14px;color:#fff">0</div>
<div class="t" style="left:649px;top:199px;width:100px;text-align:right;line-height:14px;color:#fff">6.78</div>
<div class="t" style="left:727px;top:199px;width:100px;text-align:right;line-height:14px;color:#fff">.82</div>
<div class="t" style="left:766px;top:199px;width:100px;text-align:right;line-height:14px;color:#fff">.019</div>
<div class="t" style="left:20px;top:213px;line-height:14px;color:#000">2015-05-19</div>
<div class="t" style="left:90px;top:213px;line-height:14px;color:#000">15:57:52.000</div>
<div class="t" style="left:109px;top:213px;width:100px;text-align:right;line-height:14px;color:#000">1.000</div>
<div class="t" style="left:168px;top:213px;width:100px;text-align:right;line-height:14px;color:#000">.01</div>
<div class="t" style="left:228px;top:213px;width:100px;text-align:right;line-height:14px;color:#000">.017</div>
<div class="t" style="left:284px;top:213px;width:100px;text-align:right;line-height:14px;color:#000">48</div>
<div class="t" style="left:344px;top:213px;width:100px;text-align:right;line-height:14px;color:#000">19</div>
<div class="t" style="left:385px;top:213px;width:100px;text-align:right;line-height:14px;color:#000">1</div>
<div class="t" style="left:456px;top:213px;width:100px;text-align:right;line-height:14px;color:#000">9</div>
<div class="t" style="left:516px;top:213px;width:100px;text-align:right;line-height:14px;color:#000">0</div>
<div class="t" style="left:590px;top:213px;width:100px;text-align:right;line-height:14px;color:#000">0</div>
<div class="t" style="left:649px;top:213px;width:100px;text-align:right;line-height:14px;color:#000">6.79</div>
<div class="t" style="left:727px;top:213px;width:100px;text-align:right;line-height:14px;color:#000">.82</div>
<div class="t" style="left:766px;top:213px;width:100px;text-align:right;line-height:14px;color:#000">.019</div>
<div class="t" style="left:20px;top:227px;line-height:14px;color:#000">2015-05-19</div>
<div class="t" style="left:90px;top:227px;line-height:14px;color:#000">15:57:53.000</div>
<div class="t" style="left:109px;top:227px;width:100px;text-align:right;line-height:14px;color:#000">1.000</div>
<div class="t" style="left:168px;top:227px;width:100px;text-align:right;line-height:14px;color:#000">0</div>
<div class="t" style="left:228px;top:227px;width:100px;text-align:right;line-height:14px;color:#000">0</div>
<div class="t" style="left:284px;top:227px;width:100px;text-align:right;line-height:14px;color:#000">109</div>
<div class="t" style="left:344px;top:227px;width:100px;text-align:right;line-height:14px;color:#000">19</div>
<div class="t" style="left:385px;top:227px;width:100px;text-align:right;line-height:14px;color:#000">1</div>
<div class="t" style="left:456px;top:227px;width:100px;text-align:right;line-height:14px;color:#000">9</div>
<div class="t" style="left:516px;top:227px;width:100px;text-align:right;line-height:14px;color:#000">0</div>
<div class="t" style="left:590px;top:227px;width:100px;text-align:right;line-height:14px;color:#000">0</div>
<div class="t" style="left:649px;top:227px;width:100px;text-align:right;line-height:14px;color:#000">6.79</div>
<div class="t" style="left:727px;top:227px;width:100px;text-align:right;line-height:14px;color:#000">.82</div>
<div class="t" style="left:766px;top:227px;width:100px;text-align:right;line-height:14px;color:#000">.019</div>
<div class="t" style="left:20px;top:241px;line-height:14px;color:#000">2015-05-19</div>
<div class="t" style="left:90px;top:241px;line-height:14px;color:#000">15:57:54.000</div>
<div class="t" style="left:109px;top:241px;width:100px;text-align:right;line-height:14px;color:#000">1.000</div>
<div class="t" style="left:168px;top:241px;width:100px;text-align:right;line-height:14px;color:#000">.01</div>
<div class="t" style="left:228px;top:241px;width:100px;text-align:right;line-height:14px;color:#000">.022</div>
<div class="t" style="left:284px;top:241px;width:100px;text-align:right;line-height:14px;color:#000">102</div>
<div class="t" style="left:344px;top:241px;width:100px;text-align:right;line-height:14px;color:#000">19</div>
<div class="t" style="left:385px;top:241px;width:100px;text-align:right;line-height:14px;color:#000">1</div>
<div class="t" style="left:456px;top:241px;width:100px;text-align:right;line-height:14px;color:#000">9</div>
<div class="t" style="left:516px;top:241px;width:100px;text-align:right;line-height:14px;color:#000">0</div>
<div class="t" style="left:590px;top:241px;width:100px;text-align:right;line-height:14px;color:#000">0</div>
<div class="t" style="left:649px;top:241px;width:100px;text-align:right;line-height:14px;color:#000">6.8</div>
<div class="t" style="left:727px;top:241px;width:100px;text-align:right;line-height:14px;color:#000">.82</div>
<div class="t" style="left:766px;top:241px;width:100px;text-align:right;line-height:14px;color:#000">.019</div>
<div class="t" style="left:20px;top:255px;line-height:14px;color:#000">2015-05-19</div>
<div class="t" style="left:90px;top:255px;line-height:14px;color:#000">15:57:55.000</div>
<div class="t" style="left:109px;top:255px;width:100px;text-align:right;line-height:14px;color:#000">1.000</div>
<div class="t" style="left:168px;top:255px;width:100px;text-align:right;line-height:14px;color:#000">0</div>
<div class="t" style="left:228px;top:255px;width:100px;text-align:right;line-height:14px;color:#000">0</div>
<div class="t" style="left:284px;top:255px;width:100px;text-align:right;line-height:14px;color:#000">39</div>
<div class="t" style="left:344px;top:255px;width:100px;text-align:right;line-height:14px;color:#000">19</div>
<div class="t" style="left:385px;top:255px;width:100px;text-align:right;line-height:14px;color:#000">1</div>
<div class="t" style="left:456px;top:255px;width:100px;text-align:right;line-height:14px;color:#000">9</div>
<div class="t" style="left:516px;top:255px;width:100px;text-align:right;line-height:14px;color:#000">0</div>
<div class="t" style="left:590px;top:255px;width:100px;text-align:right;line-height:14px;color:#000">0</div>
<div class="t" style="left:649px;top:255px;width:100px;text-align:right;line-height:14px;color:#000">6.8</div>
<div class="t" style="left:727px;top:255px;width:100px;text-align:right;line-height:14px;color:#000">.82</div>
<div class="t" style="left:766px;top:255px;width:100px;text-align:right;line-height:14px;color:#000">.019</div>
<div class="t" style="left:20px;top:269px;line-height:14px;color:#000">2015-05-19</div>
<div class="t" style="left:90px;top:269px;line-height:14px;color:#000">15:57:56.000</div>
<div class="t" style="left:109px;top:269px;width:100px;text-align:right;line-height:14px;color:#000">1.000</div>
<div class="t" style="left:168px;top:269px;width:100px;text-align:right;line-height:14px;color:#000">0</div>
<div class="t" style="left:228px;top:269px;width:100px;text-align:right;line-height:14px;color:#000">0</div>
<div class="t" style="left:284px;top:269px;width:100px;text-align:right;line-height:14px;color:#000">118</div>
<div class="t" style="left:344px;top:269px;width:100px;text-align:right;line-height:14px;color:#000">19</div>
<div class="t" style="left:385px;top:269px;width:100px;text-align:right;line-height:14px;color:#000">1</div>
<div class="t" style="left:456px;top:269px;width:100px;text-align:right;line-height:14px;color:#000">9</div>
<div class="t" style="left:516px;top:269px;width:100px;text-align:right;line-height:14px;color:#000">0</div>
<div class="t" style="left:590px;top:269px;width:100px;text-align:right;line-height:14px;color:#000">0</div>
<div class="t" style="left:649px;top:269px;width:100px;text-align:right;line-height:14px;color:#000">6.8</div>
<div class="t" style="left:727px;top:269px;width:100px;text-align:right;line-height:14px;color:#000">.82</div>
<div class="t" style="left:766px;top:269px;width:100px;text-align:right;line-height:14px;color:#000">.019</div>
<div class="t" style="left:20px;top:283px;line-height:14px;color:#000">2015-05-19</div>
<div class="t" style="left:90px;top:283px;line-height:14px;color:#000">15:57:57.000</div>
<div class="t" style="left:109px;top:283px;width:100px;text-align:right;line-height:14px;color:#000">1.000</div>
<div class="t" style="left:168px;top:283px;width:100px;text-align:right;line-height:14px;color:#000">0</div>
<div class="t" style="left:228px;top:283px;width:100px;text-align:right;line-height:14px;color:#000">0</div>
<div class="t" style="left:284px;top:283px;width:100px;text-align:right;line-height:14px;color:#000">83</div>
<div class="t" style="left:344px;top:283px;width:100px;text-align:right;line-height:14px;color:#000">19</div>
<div class="t" style="left:385px;top:283px;width:100px;text-align:right;line-height:14px;color:#000">1</div>
<div class="t" style="left:456px;top:283px;width:100px;text-align:right;line-height:14px;color:#000">9</div>
<div class="t" style="left:516px;top:283px;width:100px;text-align:right;line-height:14px;color:#000">0</div>
<div class="t" style="left:590px;top:283px;width:100px;text-align:right;line-height:14px;color:#000">0</div>
<div class="t" style="left:649px;top:283px;width:100px;text-align:right;line-height:14px;color:#000">6.8</div>
<div class="t" style="left:727px;top:283px;width:100px;text-align:right;line-height:14px;color:#000">.82</div>
<div class="t" style="left:766px;top:283px;width:100px;text-align:right;line-height:14px;color:#000">.019</div>
<div class="t" style="left:20px;top:297px;line-height:14px;color:#000">2015-05-19</div>
<div class="t" style="left:90px;top:297px;line-height:14px;color:#000">15:57:58.000</div>
<div class="t" style="left:109px;top:297px;width:100px;text-align:right;line-height:14px;color:#000">1.000</div>
<div class="t" style="left:168px;top:297px;width:100px;text-align:right;line-height:14px;color:#000">.01</div>
<div class="t" style="left:228px;top:297px;width:100px;text-align:right;line-height:14px;color:#000">.027</div>
<div class="t" style="left:284px;top:297px;width:100px;text-align:right;line-height:14px;color:#000">187</div>
<div class="t" style="left:344px;top:297px;width:100px;text-align:right;line-height:14px;color:#000">19</div>
<div class="t" style="left:385px;top:297px;width:100px;text-align:right;line-height:14px;color:#000">1</div>
<div class="t" style="left:456px;top:297px;width:100px;text-align:right;line-height:14px;color:#000">9</div>
<div class="t" style="left:516px;top:297px;width:100px;text-align:right;line-height:14px;color:#000">0</div>
<div class="t" style="left:590px;top:297px;width:100px;text-align:right;line-height:14px;color:#000">0</div>
<div class="t" style="left:649px;top:297px;width:100px;text-align:right;line-height:14px;color:#000">6.81</div>
<div class="t" style="left:727px;top:297px;width:100px;text-align:right;line-height:14px;color:#000">.82</div>
<div class="t" style="left:766px;top:297px;width:100px;text-align:right;line-height:14px;color:#000">.019</div>
<div class="t" style="left:20px;top:311px;line-height:14px;color:#000">2015-05-19</div>
<div class="t" style="left:90px;top:311px;line-height:14px;color:#000">15:57:59.000</div>
<div class="t" style="left:109px;top:311px;width:100px;text-align:right;line-height:14px;color:#000">1.000</div>
<div class="t" style="left:168px;top:311px;width:100px;text-align:right;line-height:14px;color:#000">0</div>
<div class="t" style="left:228px;top:311px;width:100px;text-align:right;line-height:14px;color:#000">0</div>
<div class="t" style="left:284px;top:311px;width:100px;text-align:right;line-height:14px;color:#000">116</div>
<div class="t" style="left:344px;top:311px;width:100px;text-align:right;line-height:14px;color:#000">19</div>
<div class="t" style="left:385px;top:311px;width:100px;text-align:right;line-height:14px;color:#000">1</div>
<div class="t" style="left:456px;top:311px;width:100px;text-align:right;line-height:14px;color:#000">9</div>
<div class="t" style="left:516px;top:311px;width:100px;text-align:right;line-height:14px;color:#000">0</div>
<div class="t" style="left:590px;top:311px;width:100px;text-align:right;line-height:14px;color:#000">0</div>
<div class="t" style="left:649px;top:311px;width:100px;text-align:right;line-height:14px;color:#000">6.81</div>
<div class="t" style="left:727px;top:311px;width:100px;text-align:right;line-height:14px;color:#000">.82</div>
<div class="t" style="left:766px;top:311px;width:100px;text-align:right;line-height:14px;color:#000">.019</div>
<div class="t" style="left:20px;top:325px;line-height:14px;color:#000">2015-05-19</div>
<div class="t" style="left:90px;top:325px;line-height:14px;color:#000">15:58:00.000</div>
<div class="t" style="left:109px;top:325px;width:100px;text-align:right;line-height:14px;color:#000">1.000</div>
<div class="t" style="left:168px;top:325px;width:100px;text-align:right;line-height:14px;color:#000">0</div>
<div class="t" style="left:228px;top:325px;width:100px;text-align:right;line-height:14px;color:#000">0</div>
<div class="t" style="left:284px;top:325px;width:100px;text-align:right;line-height:14px;color:#000">73</div>
<div class="t" style="left:344px;top:325px;width:100px;text-align:right;line-height:14px;color:#000">19</div>
<div class="t" style="left:385px;top:325px;width:100px;text-align:right;line-height:14px;color:#000">1</div>
<div class="t" style="left:456px;top:325px;width:100px;text-align:right;line-height:14px;color:#000">9</div>
<div class="t" style="left:516px;top:325px;width:100px;text-align:right;line-height:14px;color:#000">0</div>
<div class="t" style="left:590px;top:325px;width:100px;text-align:right;line-height:14px;color:#000">0</div>
<div class="t" style="left:649px;top:325px;width:100px;text-align:right;line-height:14px;color:#000">6.81</div>
<div class="t" style="left:727px;top:325px;width:100px;text-align:right;line-height:14px;color:#000">.82</div>
<div class="t" style="left:766px;top:325px;width:100px;text-align:right;line-height:14px;color:#000">.019</div>
<div class="t" style="left:20px;top:339px;line-height:14px;color:#000">2015-05-19</div>
<div class="t" style="left:90px;top:339px;line-height:14px;color:#000">15:58:01.000</div>
<div class="t" style="left:109px;top:339px;width:100px;text-align:right;line-height:14px;color:#000">1.000</div>
<div class="t" style="left:168px;top:339px;width:100px;text-align:right;line-height:14px;color:#000">.01</div>
<div class="t" style="left:228px;top:339px;width:100px;text-align:right;line-height:14px;color:#000">.017</div>
<div class="t" style="left:284px;top:339px;width:100px;text-align:right;line-height:14px;color:#000">81</div>
<div class="t" style="left:344px;top:339px;width:100px;text-align:right;line-height:14px;color:#000">19</div>
<div class="t" style="left:385px;top:339px;width:100px;text-align:right;line-height:14px;color:#000">1</div>
<div class="t" style="left:456px;top:339px;width:100px;text-align:right;line-height:14px;color:#000">9</div>
<div class="t" style="left:516px;top:339px;width:100px;text-align:right;line-height:14px;color:#000">0</div>
<div class="t" style="left:590px;top:339px;width:100px;text-align:right;line-height:14px;color:#000">0</div>
<div class="t" style="left:649px;top:339px;width:100px;text-align:right;line-height:14px;color:#000">6.82</div>
<div class="t" style="left:727px;top:339px;width:100px;text-align:right;line-height:14px;color:#000">.82</div>
<div class="t" style="left:766px;top:339px;width:100px;text-align:right;line-height:14px;color:#000">.019</div>
<div class="t" style="left:20px;top:353px;line-height:14px;color:#000">2015-05-19</div>
<div class="t" style="left:90px;top:353px;line-height:14px;color:#000">15:58:02.000</div>
<div class="t" style="left:109px;top:353px;width:100px;text-align:right;line-height:14px;color:#000">1.000</div>
<div class="t" style="left:168px;top:353px;width:100px;text-align:right;line-height:14px;color:#000">.01</div>
<div class="t" style="left:228px;top:353px;width:100px;text-align:right;line-height:14px;color:#000">.022</div>
<div class="t" style="left:284px;top:353px;width:100px;text-align:right;line-height:14px;color:#000">51</div>
<div class="t" style="left:344px;top:353px;width:100px;text-align:right;line-height:14px;color:#000">19</div>
<div class="t" style="left:385px;top:353px;width:100px;text-align:right;line-height:14px;color:#000">1</div>
<div class="t" style="left:456px;top:353px;width:100px;text-align:right;line-height:14px;color:#000">9</div>
<div class="t" style="left:516px;top:353px;width:100px;text-align:right;line-height:14px;color:#000">0</div>
<div class="t" style="left:590px;top:353px;width:100px;text-align:right;line-height:14px;color:#000">0</div>
<div class="t" style="left:649px;top:353px;width:100px;text-align:right;line-height:14px;color:#000">6.83</div>
<div class="t" style="left:727px;top:353px;width:100px;text-align:right;line-height:14px;color:#000">.82</div>
<div class="t" style="left:766px;top:353px;width:100px;text-align:right;line-height:14px;color:#000">.019</div>
</div>
<div style="left:1258px;top:191px;width:16px;height:343px;background:repeating-conic-gradient(#d4d0c8 0 25%,#fff 0 50%) 0 0/2px 2px;"></div>
<div style="left:1258px;top:174px;width:16px;height:17px;background:#d4d0c8;box-shadow:inset -1px -1px #404040,inset 1px 1px #fff,inset -2px -2px #808080;"></div>
<svg style="left:1258px;top:174px" width="16" height="16"><path d="M4 10 H11 L7.5 6.5 Z" fill="#000"/></svg>
<div style="left:1258px;top:206px;width:16px;height:8px;background:#d4d0c8;box-shadow:inset -1px -1px #404040,inset 1px 1px #fff,inset -2px -2px #808080;"></div>
<div style="left:1258px;top:518px;width:16px;height:16px;background:#d4d0c8;box-shadow:inset -1px -1px #404040,inset 1px 1px #fff,inset -2px -2px #808080;"></div>
<svg style="left:1258px;top:518px" width="16" height="16"><path d="M4 6 H11 L7.5 9.5 Z" fill="#000"/></svg>
<div style="left:385px;top:534px;width:873px;height:16px;background:repeating-conic-gradient(#d4d0c8 0 25%,#fff 0 50%) 0 0/2px 2px;"></div>
<div style="left:385px;top:534px;width:16px;height:16px;background:#d4d0c8;box-shadow:inset -1px -1px #404040,inset 1px 1px #fff,inset -2px -2px #808080;"></div>
<svg style="left:385px;top:534px" width="16" height="16"><path d="M9.5 4 V11 L6 7.5 Z" fill="#000"/></svg>
<div style="left:425px;top:534px;width:816px;height:16px;background:#d4d0c8;box-shadow:inset -1px -1px #404040,inset 1px 1px #fff,inset -2px -2px #808080;"></div>
<div style="left:1241px;top:534px;width:17px;height:16px;background:#d4d0c8;box-shadow:inset -1px -1px #404040,inset 1px 1px #fff,inset -2px -2px #808080;"></div>
<svg style="left:1241px;top:534px" width="17" height="16"><path d="M7 4 V11 L10.5 7.5 Z" fill="#000"/></svg>
<div style="left:1258px;top:534px;width:16px;height:16px;background:#d4d0c8;"></div>
<div style="left:385px;top:550px;width:890px;height:6px;background:#d4d0c8;box-shadow:inset 0 1px #fff;"></div>
<div style="left:382px;top:556px;width:893px;height:1px;background:#000;"></div>
<div style="left:383px;top:557px;width:892px;height:3px;background:#fff;"></div>
<div style="left:382px;top:560px;width:898px;height:2px;background:#d4d0c8;box-shadow:inset 0 -1px #fff;"></div>
<div style="left:0px;top:562px;width:1280px;height:7px;background:#d4d0c8;"></div>
<div style="left:0px;top:563px;width:1280px;height:2px;background:#fff;"></div>
<svg style="left:370px;top:549px" width="8" height="12" viewBox="0 0 8 12"><path d="M1 1.5 H3 Q5.5 1.5 5.5 5 V7 Q5.5 10.5 3 10.5 H1" fill="none" stroke="#303030" stroke-width="1.3"/></svg>
<div style="left:0px;top:569px;width:1280px;height:167px;background:#fff;box-shadow:inset 1px 1px #808080,inset 2px 2px #000,inset -1px 0 #fff,inset -2px 0 #d4d0c8;"></div>
<svg style="left:2px;top:571px" width="1276" height="165" viewBox="2 571 1276 165" shape-rendering="crispEdges">
<path d="M10 611.5 H1278" stroke="#c0c0c0" stroke-width="1" fill="none"/>
<path d="M2 622.5 H370 M370 633.5 H585 V644.5 H602.5 V633.5 H612.5 V622.5 H761 M779 633.5 H810.5 V622.5 H818 M830 633.5 H845.5 V622.5 H983.5 V633.5 H1126.5 V622.5 H1143 V633.5 H1278" stroke="#f08a24" stroke-width="1" fill="none"/>
<path d="M14 666.5 H585 M588 656.5 H602.5 V666.5 H761 M778 656.5 H810.5 V666.5 H818 M830 656.5 H845.5 V666.5 H941 V677.5 H952 M972 666.5 H983.5 V656.5 H1126.5 V677.5 H1128.5 V666.5 H1138 M1143 656.5 H1278" stroke="#5a5a5a" stroke-width="1" fill="none"/>
<rect x="585" y="633" width="1" height="12" fill="#f08a24"/>
<rect x="586" y="633" width="1" height="12" fill="#f08a24"/>
<rect x="587" y="633" width="1" height="12" fill="#f08a24"/>
<rect x="631" y="622" width="1" height="12" fill="#f08a24"/>
<rect x="632" y="622" width="1" height="12" fill="#f08a24"/>
<rect x="633" y="622" width="1" height="12" fill="#f08a24"/>
<rect x="634" y="622" width="1" height="12" fill="#f08a24"/>
<rect x="635" y="622" width="1" height="12" fill="#f08a24"/>
<rect x="636" y="622" width="1" height="12" fill="#f08a24"/>
<rect x="638" y="622" width="1" height="12" fill="#f08a24"/>
<rect x="639" y="622" width="1" height="12" fill="#f08a24"/>
<rect x="640" y="622" width="1" height="12" fill="#f08a24"/>
<rect x="642" y="622" width="1" height="12" fill="#f08a24"/>
<rect x="761" y="622" width="1" height="12" fill="#f08a24"/>
<rect x="763" y="622" width="1" height="12" fill="#f08a24"/>
<rect x="764" y="622" width="1" height="12" fill="#f08a24"/>
<rect x="767" y="622" width="1" height="12" fill="#f08a24"/>
<rect x="768" y="622" width="1" height="12" fill="#f08a24"/>
<rect x="769" y="622" width="1" height="12" fill="#f08a24"/>
<rect x="770" y="622" width="1" height="12" fill="#f08a24"/>
<rect x="774" y="622" width="1" height="12" fill="#f08a24"/>
<rect x="775" y="622" width="1" height="12" fill="#f08a24"/>
<rect x="776" y="622" width="1" height="12" fill="#f08a24"/>
<rect x="777" y="622" width="1" height="12" fill="#f08a24"/>
<rect x="778" y="622" width="1" height="12" fill="#f08a24"/>
<rect x="818" y="622" width="1" height="12" fill="#f08a24"/>
<rect x="819" y="622" width="1" height="12" fill="#f08a24"/>
<rect x="822" y="622" width="1" height="12" fill="#f08a24"/>
<rect x="824" y="622" width="1" height="12" fill="#f08a24"/>
<rect x="825" y="622" width="1" height="12" fill="#f08a24"/>
<rect x="826" y="622" width="1" height="12" fill="#f08a24"/>
<rect x="829" y="622" width="1" height="12" fill="#f08a24"/>
<rect x="944" y="622" width="1" height="12" fill="#f08a24"/>
<rect x="947" y="622" width="1" height="12" fill="#f08a24"/>
<rect x="953" y="622" width="1" height="12" fill="#f08a24"/>
<rect x="955" y="622" width="1" height="12" fill="#f08a24"/>
<rect x="959" y="622" width="1" height="12" fill="#f08a24"/>
<rect x="960" y="622" width="1" height="12" fill="#f08a24"/>
<rect x="961" y="622" width="1" height="12" fill="#f08a24"/>
<rect x="962" y="622" width="1" height="12" fill="#f08a24"/>
<rect x="963" y="622" width="1" height="12" fill="#f08a24"/>
<rect x="965" y="622" width="1" height="12" fill="#f08a24"/>
<rect x="968" y="622" width="1" height="12" fill="#f08a24"/>
<rect x="970" y="622" width="1" height="12" fill="#f08a24"/>
<rect x="979" y="622" width="1" height="12" fill="#f08a24"/>
<rect x="981" y="622" width="1" height="12" fill="#f08a24"/>
<rect x="982" y="622" width="1" height="12" fill="#f08a24"/>
<rect x="1138" y="622" width="1" height="12" fill="#f08a24"/>
<rect x="1139" y="622" width="1" height="12" fill="#f08a24"/>
<rect x="1140" y="622" width="1" height="12" fill="#f08a24"/>
<rect x="1141" y="622" width="1" height="12" fill="#f08a24"/>
<rect x="1142" y="622" width="1" height="12" fill="#f08a24"/>
<rect x="713" y="622" width="1" height="12" fill="#f08a24"/>
<rect x="880" y="622" width="1" height="12" fill="#f08a24"/>
<rect x="883" y="622" width="1" height="12" fill="#f08a24"/>
<rect x="932" y="622" width="1" height="12" fill="#f08a24"/>
<rect x="585" y="656" width="1" height="11" fill="#5a5a5a"/>
<rect x="586" y="656" width="1" height="11" fill="#5a5a5a"/>
<rect x="587" y="656" width="1" height="11" fill="#5a5a5a"/>
<rect x="761" y="656" width="1" height="11" fill="#5a5a5a"/>
<rect x="762" y="656" width="1" height="11" fill="#5a5a5a"/>
<rect x="767" y="656" width="1" height="11" fill="#5a5a5a"/>
<rect x="769" y="656" width="1" height="11" fill="#5a5a5a"/>
<rect x="770" y="656" width="1" height="11" fill="#5a5a5a"/>
<rect x="774" y="656" width="1" height="11" fill="#5a5a5a"/>
<rect x="775" y="656" width="1" height="11" fill="#5a5a5a"/>
<rect x="777" y="656" width="1" height="11" fill="#5a5a5a"/>
<rect x="818" y="656" width="1" height="11" fill="#5a5a5a"/>
<rect x="820" y="656" width="1" height="11" fill="#5a5a5a"/>
<rect x="822" y="656" width="1" height="11" fill="#5a5a5a"/>
<rect x="824" y="656" width="1" height="11" fill="#5a5a5a"/>
<rect x="827" y="656" width="1" height="11" fill="#5a5a5a"/>
<rect x="945" y="656" width="1" height="22" fill="#5a5a5a"/>
<rect x="947" y="656" width="1" height="22" fill="#5a5a5a"/>
<rect x="949" y="656" width="1" height="22" fill="#5a5a5a"/>
<rect x="950" y="656" width="1" height="22" fill="#5a5a5a"/>
<rect x="951" y="656" width="1" height="22" fill="#5a5a5a"/>
<rect x="952" y="656" width="1" height="22" fill="#5a5a5a"/>
<rect x="953" y="656" width="1" height="22" fill="#5a5a5a"/>
<rect x="954" y="656" width="1" height="22" fill="#5a5a5a"/>
<rect x="955" y="656" width="1" height="22" fill="#5a5a5a"/>
<rect x="957" y="656" width="1" height="22" fill="#5a5a5a"/>
<rect x="959" y="656" width="1" height="22" fill="#5a5a5a"/>
<rect x="961" y="656" width="1" height="22" fill="#5a5a5a"/>
<rect x="964" y="656" width="1" height="22" fill="#5a5a5a"/>
<rect x="965" y="656" width="1" height="22" fill="#5a5a5a"/>
<rect x="970" y="656" width="1" height="22" fill="#5a5a5a"/>
<rect x="971" y="656" width="1" height="22" fill="#5a5a5a"/>
<rect x="1126" y="656" width="1" height="22" fill="#5a5a5a"/>
<rect x="1127" y="656" width="1" height="22" fill="#5a5a5a"/>
<rect x="1138" y="656" width="1" height="22" fill="#5a5a5a"/>
<rect x="1139" y="656" width="1" height="22" fill="#5a5a5a"/>
<rect x="1140" y="656" width="1" height="22" fill="#5a5a5a"/>
<rect x="1141" y="656" width="1" height="22" fill="#5a5a5a"/>
<rect x="1142" y="656" width="1" height="22" fill="#5a5a5a"/>
<rect x="713" y="656" width="1" height="11" fill="#5a5a5a"/>
<rect x="880" y="656" width="1" height="11" fill="#5a5a5a"/>
<rect x="883" y="656" width="1" height="11" fill="#5a5a5a"/>
<rect x="932" y="656" width="1" height="11" fill="#5a5a5a"/>
<path d="M11.5 666 V677.5 H6 M14 666.5 H11" stroke="#5a5a5a" fill="none"/>
<rect x="11" y="666" width="3" height="11" fill="#5a5a5a"/>
<rect x="3" y="665" width="3" height="12" fill="#4c3a8a"/>
<path d="M5.5 665 V705.5 H13.5 V713.5 H1278" stroke="#4c3a8a" fill="none"/>
<rect x="12" y="705" width="3" height="9" fill="#4c3a8a"/>
<path d="M5.5 702 V718.5 H14" stroke="#2e6e2e" fill="none"/>
<path d="M19.5 718 V722 M25 718 L23 722 M28.5 718 V722 H30 M36 718 L34 722 M38 718 L36 722 M48 718 L46 722 M52 718 L50 722 M57.5 718 V722 H59 M61 718 L59 722 M69 718 L67 722 M73 718 L71 722 M75.5 718 V722 M77.5 718 V722 H79 M82 718 L80 722 M370.5 718 V722 M374 718 L372 722 M376 718 L374 722 M378 718 L376 722 M381.5 718 V722 H383 M387.5 718 V722 M391 718 L389 722 M393 718 L391 722 M393.5 718 V722 H395 M407 718 L405 722 M409.5 718 V722 M411.5 718 V722 H413 M423 718 L421 722 M423.5 718 V722 H425 M428.5 718 V722 H430 M430.5 718 V722 M447.5 718 V722 H449 M451 718 L449 722 M456 718 L454 722 M456.5 718 V722 M460 718 L458 722 M463 718 L461 722 M464.5 718 V722 H466 M469 718 L467 722 M472 718 L470 722 M472.5 718 V722 M474.5 718 V722 M478 718 L476 722 M481 718 L479 722 M482.5 718 V722 M485.5 718 V722 M487.5 718 V722 M489.5 718 V722 M491.5 718 V722 H493 M493.5 718 V722 M495.5 718 V722 M499.5 718 V722 M501.5 718 V722 M506 718 L504 722 M506.5 718 V722 H508 M508.5 718 V722 H510 M510.5 718 V722 H512 M514 718 L512 722 M514.5 718 V722 M518 718 L516 722 M518.5 718 V722 H520 M522 718 L520 722 M524 718 L522 722 M524.5 718 V722 M526.5 718 V722 H528 M530 718 L528 722 M532 718 L530 722 M534 718 L532 722 M534.5 718 V722 H536 M536.5 718 V722 M538.5 718 V722 H540 M542 718 L540 722 M542.5 718 V722 M544.5 718 V722 H546 M546.5 718 V722 H548 M550 718 L548 722 M552 718 L550 722 M554 718 L552 722 M556 718 L554 722 M559 718 L557 722 M559.5 718 V722 M561.5 718 V722 M565 718 L563 722 M572.5 718 V722 H574 M584.5 718 V722 M598.5 718 V722 M602 718 L600 722 M603.5 718 V722 M606.5 718 V722 M608.5 718 V722 H610 M611.5 718 V722 M613.5 718 V722 H615 M619.5 718 V722 M621.5 718 V722 H623 M625 718 L623 722 M625.5 718 V722 H627 M629 718 L627 722 M631 718 L629 722 M631.5 718 V722 H633 M635 718 L633 722 M637 718 L635 722 M639 718 L637 722 M657 718 L655 722 M659 718 L657 722 M661 718 L659 722 M661.5 718 V722 M665 718 L663 722 M665.5 718 V722 M669 718 L667 722 M671 718 L669 722 M672.5 718 V722 M675.5 718 V722 H677 M679 718 L677 722 M680.5 718 V722 H682 M686.5 718 V722 M691 718 L689 722 M697.5 718 V722 M711.5 718 V722 M727.5 718 V722 M731 718 L729 722 M733 718 L731 722 M735 718 L733 722 M736.5 718 V722 H738 M740 718 L738 722 M740.5 718 V722 M743.5 718 V722 M745.5 718 V722 M748.5 718 V722 M752 718 L750 722 M758 718 L756 722 M759.5 718 V722 M767 718 L765 722 M770 718 L768 722 M772 718 L770 722 M773.5 718 V722 M778 718 L776 722 M780 718 L778 722 M782 718 L780 722 M782.5 718 V722 M784.5 718 V722 H786 M786.5 718 V722 H788 M790 718 L788 722 M790.5 718 V722 H792 M801 718 L799 722 M803 718 L801 722 M803.5 718 V722 M806.5 718 V722 M808.5 718 V722 M810.5 718 V722 M812.5 718 V722 H814 M816 718 L814 722 M816.5 718 V722 H818 M818.5 718 V722 M822 718 L820 722 M830.5 718 V722 H832 M832.5 718 V722 M835.5 718 V722 M839 718 L837 722 M839.5 718 V722 H841 M842.5 718 V722 H844 M844.5 718 V722 M848 718 L846 722 M848.5 718 V722 M850.5 718 V722 H852 M852.5 718 V722 M857 718 L855 722 M858.5 718 V722 H860 M862 718 L860 722 M871.5 718 V722 H873 M876 718 L874 722 M876.5 718 V722 H878 M894 718 L892 722 M900.5 718 V722 M902.5 718 V722 M904.5 718 V722 M910 718 L908 722 M910.5 718 V722 H912 M914 718 L912 722 M916 718 L914 722 M919 718 L917 722 M921 718 L919 722 M928 718 L926 722 M929.5 718 V722 H931 M931.5 718 V722 M935 718 L933 722 M936.5 718 V722 M940 718 L938 722 M941.5 718 V722 H943 M944.5 718 V722 H946 M970 718 L968 722 M972 718 L970 722 M977 718 L975 722 M989 718 L987 722 M994 718 L992 722 M996.5 718 V722 H998 M1021 718 L1019 722 M1021.5 718 V722 M1023.5 718 V722 H1025 M1027.5 718 V722 H1029 M1029.5 718 V722 M1033 718 L1031 722 M1050.5 718 V722 M1057.5 718 V722 H1059 M1059.5 718 V722 H1061 M1069 718 L1067 722 M1076.5 718 V722 H1078 M1083 718 L1081 722 M1083.5 718 V722 M1117.5 718 V722 H1119 M1136.5 718 V722 H1138 M1168.5 718 V722 M1172 718 L1170 722 M1186.5 718 V722 H1188 M1194.5 718 V722 H1196 M1198.5 718 V722 H1200 M1203.5 718 V722 M1212 718 L1210 722 M1212.5 718 V722 M1214.5 718 V722 H1216 M1217.5 718 V722 H1219 M1220.5 718 V722 H1222 M1224 718 L1222 722 M1225.5 718 V722 M1229 718 L1227 722 M1229.5 718 V722 H1231 M1234 718 L1232 722 M1235.5 718 V722 H1237 M1240 718 L1238 722 M1242 718 L1240 722 M1243.5 718 V722 M1245.5 718 V722 H1247 M1248.5 718 V722 H1250 M1252 718 L1250 722 M1252.5 718 V722 M1255.5 718 V722 M1259 718 L1257 722 M1259.5 718 V722 M1261.5 718 V722 H1263 M1263.5 718 V722 M1266.5 718 V722 H1268 M1271 718 L1269 722 M1271.5 718 V722 H1273 M1273.5 718 V722 M1276.5 718 V722" stroke="#2e6e2e" stroke-width="1.5" fill="none"/>
<rect x="14" y="721" width="1" height="15" fill="#c8c8c8"/>
<rect x="95" y="721" width="1" height="15" fill="#c8c8c8"/>
<rect x="176" y="721" width="1" height="15" fill="#c8c8c8"/>
<rect x="257" y="721" width="1" height="15" fill="#c8c8c8"/>
<rect x="338" y="721" width="1" height="15" fill="#c8c8c8"/>
<rect x="419" y="721" width="1" height="15" fill="#c8c8c8"/>
<rect x="500" y="721" width="1" height="15" fill="#c8c8c8"/>
<rect x="581" y="721" width="1" height="15" fill="#c8c8c8"/>
<rect x="662" y="721" width="1" height="15" fill="#c8c8c8"/>
<rect x="743" y="721" width="1" height="15" fill="#c8c8c8"/>
<rect x="824" y="721" width="1" height="15" fill="#c8c8c8"/>
<rect x="905" y="721" width="1" height="15" fill="#c8c8c8"/>
<rect x="986" y="721" width="1" height="15" fill="#c8c8c8"/>
<rect x="1067" y="721" width="1" height="15" fill="#c8c8c8"/>
<rect x="1148" y="721" width="1" height="15" fill="#c8c8c8"/>
</svg>
<div class="t" style="left:18px;top:722px;line-height:14px;font-size:14px;font-weight:bold;color:#c0c0c0;letter-spacing:1.3px;transform:scaleX(0.86);transform-origin:0 0;">15:55</div>
<div class="t" style="left:99px;top:722px;line-height:14px;font-size:14px;font-weight:bold;color:#c0c0c0;letter-spacing:1.3px;transform:scaleX(0.86);transform-origin:0 0;">15:59</div>
<div class="t" style="left:180px;top:722px;line-height:14px;font-size:14px;font-weight:bold;color:#c0c0c0;letter-spacing:1.3px;transform:scaleX(0.86);transform-origin:0 0;">16:03</div>
<div class="t" style="left:261px;top:722px;line-height:14px;font-size:14px;font-weight:bold;color:#c0c0c0;letter-spacing:1.3px;transform:scaleX(0.86);transform-origin:0 0;">16:07</div>
<div class="t" style="left:342px;top:722px;line-height:14px;font-size:14px;font-weight:bold;color:#c0c0c0;letter-spacing:1.3px;transform:scaleX(0.86);transform-origin:0 0;">16:11</div>
<div class="t" style="left:423px;top:722px;line-height:14px;font-size:14px;font-weight:bold;color:#c0c0c0;letter-spacing:1.3px;transform:scaleX(0.86);transform-origin:0 0;">16:15</div>
<div class="t" style="left:504px;top:722px;line-height:14px;font-size:14px;font-weight:bold;color:#c0c0c0;letter-spacing:1.3px;transform:scaleX(0.86);transform-origin:0 0;">16:19</div>
<div class="t" style="left:585px;top:722px;line-height:14px;font-size:14px;font-weight:bold;color:#c0c0c0;letter-spacing:1.3px;transform:scaleX(0.86);transform-origin:0 0;">16:23</div>
<div class="t" style="left:666px;top:722px;line-height:14px;font-size:14px;font-weight:bold;color:#c0c0c0;letter-spacing:1.3px;transform:scaleX(0.86);transform-origin:0 0;">16:27</div>
<div class="t" style="left:747px;top:722px;line-height:14px;font-size:14px;font-weight:bold;color:#c0c0c0;letter-spacing:1.3px;transform:scaleX(0.86);transform-origin:0 0;">16:31</div>
<div class="t" style="left:828px;top:722px;line-height:14px;font-size:14px;font-weight:bold;color:#c0c0c0;letter-spacing:1.3px;transform:scaleX(0.86);transform-origin:0 0;">16:35</div>
<div class="t" style="left:909px;top:722px;line-height:14px;font-size:14px;font-weight:bold;color:#c0c0c0;letter-spacing:1.3px;transform:scaleX(0.86);transform-origin:0 0;">16:39</div>
<div class="t" style="left:990px;top:722px;line-height:14px;font-size:14px;font-weight:bold;color:#c0c0c0;letter-spacing:1.3px;transform:scaleX(0.86);transform-origin:0 0;">16:43</div>
<div class="t" style="left:1071px;top:722px;line-height:14px;font-size:14px;font-weight:bold;color:#c0c0c0;letter-spacing:1.3px;transform:scaleX(0.86);transform-origin:0 0;">16:47</div>
<div class="t" style="left:1152px;top:722px;line-height:14px;font-size:14px;font-weight:bold;color:#c0c0c0;letter-spacing:1.3px;transform:scaleX(0.86);transform-origin:0 0;">16:51</div>
<div class="t" style="left:1213px;top:722px;line-height:14px;font-size:14px;font-weight:bold;color:#484848;letter-spacing:1.3px;transform:scaleX(0.86);transform-origin:0 0;">Zoom=0.0</div>
<div class="t" style="left:3px;top:604px;line-height:14px;font-size:14px;color:#c0c0c0;">1</div>
<div class="t" style="left:1230px;top:604px;line-height:14px;font-size:14px;font-weight:bold;letter-spacing:1.3px;transform:scaleX(0.86);transform-origin:0 0;"><span style="color:#3c3490">.5</span></div>
<div class="t" style="left:1254px;top:604px;line-height:14px;font-size:14px;font-weight:bold;letter-spacing:1.3px;transform:scaleX(0.86);transform-origin:0 0;"><span style="color:#404040">2</span><span style="color:#d0902c">10</span></div>
<div style="left:0px;top:736px;width:1280px;height:16px;background:#d4d0c8;box-shadow:inset 1px 0 #808080,inset 2px 0 #000;"></div>
<div style="left:2px;top:736px;width:16px;height:16px;background:#d4d0c8;box-shadow:inset -1px -1px #404040,inset 1px 1px #fff,inset -2px -2px #808080;"></div>
<svg style="left:2px;top:736px" width="16" height="16"><path d="M9.5 4 V11 L6 7.5 Z" fill="#000"/></svg>
<div style="left:18px;top:736px;width:1243px;height:16px;background:#d4d0c8;box-shadow:inset -1px -1px #404040,inset 1px 1px #fff,inset -2px -2px #808080;"></div>
<div style="left:1261px;top:736px;width:17px;height:16px;background:#d4d0c8;box-shadow:inset -1px -1px #404040,inset 1px 1px #fff,inset -2px -2px #808080;"></div>
<svg style="left:1261px;top:736px" width="17" height="16"><path d="M7 4 V11 L10.5 7.5 Z" fill="#000"/></svg>
<div style="left:0px;top:752px;width:1280px;height:1px;background:#fff;"></div>
<div class="t" style="left:1px;top:758px;line-height:13px;font-size:11px;">Ready</div>
<div style="left:854px;top:756px;width:36px;height:16px;box-shadow:inset 1px 1px #808080,inset -1px -1px #fff;overflow:hidden;"><div class="t" style="left:1px;top:2px;line-height:13px"><span style="letter-spacing:-0.7px">SPEED</span></div></div>
<div style="left:892px;top:756px;width:36px;height:16px;box-shadow:inset 1px 1px #808080,inset -1px -1px #fff;overflow:hidden;"><div class="t" style="left:1px;top:2px;line-height:13px">AVG</div></div>
<div style="left:930px;top:756px;width:55px;height:16px;box-shadow:inset 1px 1px #808080,inset -1px -1px #fff;overflow:hidden;"><div class="t" style="left:1px;top:2px;line-height:13px">DIST</div></div>
<div style="left:988px;top:756px;width:68px;height:16px;box-shadow:inset 1px 1px #808080,inset -1px -1px #fff;overflow:hidden;"><div class="t" style="left:1px;top:2px;line-height:13px">-38.10310095</div></div>
<div style="left:1058px;top:756px;width:76px;height:16px;box-shadow:inset 1px 1px #808080,inset -1px -1px #fff;overflow:hidden;"><div class="t" style="left:1px;top:2px;line-height:13px">+147.07790493</div></div>
<div style="left:1136px;top:756px;width:66px;height:16px;box-shadow:inset 1px 1px #808080,inset -1px -1px #fff;overflow:hidden;"><div class="t" style="left:1px;top:2px;line-height:13px">TIME</div></div>
<div style="left:1204px;top:756px;width:76px;height:16px;box-shadow:inset 1px 1px #808080,inset -1px -1px #fff;overflow:hidden;"><div class="t" style="left:1px;top:2px;line-height:13px">Rectangular</div></div>
<div style="left:0px;top:773px;width:1280px;height:27px;background:#d4d0c8;"></div>
<div style="left:0px;top:773px;width:1280px;height:1px;background:#fff;"></div>
<div style="left:2px;top:776px;width:52px;height:22px;background:#d4d0c8;box-shadow:inset -1px -1px #404040,inset 1px 1px #fff,inset -2px -2px #808080;"></div>
<svg style="left:4px;top:779px" width="17" height="16" viewBox="0 0 17 16">
<path d="M3 2 Q5 1 8 2 L7 7 Q4 6 2 7 Z" fill="#f04a1a"/>
<path d="M9 2 Q12 3 15 2 L14 7 Q11 8 8 7 Z" fill="#5ab830"/>
<path d="M2 8 Q4 7 7 8 L6 13 Q3 12 1 13 Z" fill="#2a6ae0"/>
<path d="M8 8 Q11 9 14 8 L13 13 Q10 14 7 13 Z" fill="#f8c020"/>
</svg>
<div class="t" style="left:22px;top:780px;line-height:14px;font-size:12px;font-weight:bold;">Start</div>
<div style="left:61px;top:776px;width:1px;height:21px;background:#fff;"></div>
<div style="left:62px;top:776px;width:2px;height:21px;background:#d4d0c8;box-shadow:inset -1px -1px #808080;"></div>
<div style="left:68px;top:776px;width:160px;height:22px;background:repeating-conic-gradient(#d4d0c8 0 25%,#fff 0 50%) 0 0/2px 2px;box-shadow:inset 1px 1px #000,inset -1px -1px #fff,inset 2px 2px #808080;"></div>
<div style="left:73px;top:780px;width:4px;height:16px;background:#e01010;"></div>
<div style="left:77px;top:780px;width:4px;height:4px;background:#fff;"></div>
<div style="left:81px;top:780px;width:4px;height:4px;background:#000;"></div>
<div style="left:85px;top:780px;width:4px;height:4px;background:#fff;"></div>
<div style="left:77px;top:784px;width:4px;height:4px;background:#000;"></div>
<div style="left:81px;top:784px;width:4px;height:4px;background:#fff;"></div>
<div style="left:85px;top:784px;width:4px;height:4px;background:#000;"></div>
<div style="left:77px;top:788px;width:4px;height:4px;background:#fff;"></div>
<div style="left:81px;top:788px;width:4px;height:4px;background:#000;"></div>
<div style="left:85px;top:788px;width:4px;height:4px;background:#fff;"></div>
<div style="left:77px;top:792px;width:4px;height:4px;background:#000;"></div>
<div style="left:81px;top:792px;width:4px;height:4px;background:#fff;"></div>
<div style="left:85px;top:792px;width:4px;height:4px;background:#000;"></div>
<div class="t" style="left:93px;top:782px;line-height:13px;font-size:11px;font-weight:bold;letter-spacing:0.2px;">All Divisions</div>
<div style="left:790px;top:776px;width:1px;height:21px;background:#fff;"></div>
<div style="left:791px;top:776px;width:2px;height:21px;background:#d4d0c8;box-shadow:inset -1px -1px #808080;"></div>
<div style="left:798px;top:776px;width:143px;height:22px;background:#fff;box-shadow:inset 1px 1px #808080,inset -1px -1px #fff,inset 2px 2px #404040,inset -2px -2px #d4d0c8;"></div>
<div class="t" style="left:803px;top:780px;line-height:14px;font-size:11.5px;color:#8a8a8a;">Search Desktop</div>
<div style="left:955px;top:779px;width:49px;height:17px;background:#70ee48;box-shadow:inset 1px 1px #d0ffc0,inset -1px -1px #1a3a1a,inset -2px -2px #40a030;"></div>
<div style="left:955px;top:779px;width:49px;height:16px;"><div class="t" style="left:0;top:1px;width:49px;text-align:center;font-weight:bold;font-size:12.5px;line-height:14px">100%</div></div>
<div style="left:1004px;top:783px;width:3px;height:8px;background:#606060;"></div>
<svg style="left:1009px;top:780px" width="19" height="15" viewBox="0 0 19 15">
<rect x="5" y="1" width="6" height="13" rx="3" fill="#000"/>
<rect x="9" y="3" width="8" height="2" fill="#000"/>
<rect x="9" y="9" width="8" height="2" fill="#000"/>
<rect x="1" y="6" width="5" height="3" fill="#000"/>
</svg>
<div style="left:1036px;top:776px;width:244px;height:21px;box-shadow:inset 1px 1px #808080,inset -1px -1px #fff;"></div>
<svg style="left:1036px;top:776px" width="190" height="21" viewBox="1036 776 190 21">
<path d="M1043 780 L1049 780 L1049 778 L1053 782 L1049 786 L1049 784 L1043 784 Z" fill="#3cb43c"/>
<path d="M1041 787 L1051 785 L1054 790 L1044 793 Z" fill="#606060"/>
<path d="M1043 788 L1050 787 L1052 790 L1045 791 Z" fill="#a0a0a0"/>
<circle cx="1068" cy="785" r="4.5" fill="#dce8f8" stroke="#5070b0" stroke-width="1.2"/>
<path d="M1058 792 L1064 788" stroke="#303890" stroke-width="3"/>
<path d="M1080 778 H1086 L1089 781 V791 L1086 795 H1080 L1077 791 V781 Z" fill="#1e1e9a"/>
<path d="M1081 782 L1086 789 L1083 792 V780 L1086 783 L1081 790" stroke="#e02020" fill="none" stroke-width="1"/>
<rect x="1093" y="779" width="15" height="9" fill="#108880" stroke="#064"/>
<path d="M1095 782 H1106 M1095 785 H1101" stroke="#60d0c0"/>
<ellipse cx="1105" cy="789" rx="3.5" ry="5" fill="#e8e8e8" stroke="#303030"/>
<path d="M1113 785 Q1119 780 1125 786 Q1119 792 1113 785 Z" fill="#fff" stroke="#000" stroke-width="1.2"/>
<path d="M1116 780 L1124 790" stroke="#000" stroke-width="1.5"/>
<circle cx="1120" cy="786" r="2" fill="#000"/>
<rect x="1131" y="782" width="8" height="7" fill="#2a3a90" stroke="#102060"/>
<rect x="1130" y="790" width="10" height="3" fill="#d0d8f0" stroke="#203070" stroke-width="0.6"/>
<path d="M1141 781 Q1143 785 1141 789 M1143 779 Q1146 785 1143 791" stroke="#303030" fill="none"/>
<rect x="1153" y="780" width="8" height="8" fill="#2a3a90"/>
<rect x="1148" y="784" width="7" height="7" fill="#3040a0"/>
<rect x="1148" y="791" width="7" height="2" fill="#d0d8f0"/>
<path d="M1154 786 L1162 794 M1162 786 L1154 794" stroke="#e02020" stroke-width="2"/>
<circle cx="1172" cy="785" r="6" fill="#b8b8b8" stroke="#404040" stroke-width="1.4"/>
<circle cx="1172" cy="785" r="2" fill="#f0f0f0" stroke="#404040" stroke-width="0.8"/>
<path d="M1184.5 780 L1190.5 778.5 L1196.5 780 V786 Q1196 791 1190.5 794 Q1185 791 1184.5 786 Z" fill="#f0e020" stroke="#202020" stroke-width="1.2"/>
<rect x="1190" y="781" width="1.6" height="6" fill="#000"/>
<rect x="1190" y="788.5" width="1.6" height="1.8" fill="#000"/>
<path d="M1202 781 L1207 784 L1209 788 L1211 784 L1216 781 L1216 790 L1211 794 L1209 790 L1207 794 L1202 790 Z" fill="#2a70d8"/>
<path d="M1207 789 Q1209 791 1211 789" stroke="#fff" stroke-width="1.5" fill="none"/>
</svg>
<div class="t" style="left:1224px;top:781px;line-height:13px;font-size:11px;">11:48 PM</div>
<div style="left:86px;top:353px;width:285px;height:370px;background:#d4d0c8;box-shadow:inset 1px 1px #d4d0c8,inset -1px -1px #404040,inset 2px 2px #fff,inset -2px -2px #808080;"></div>
<div style="left:89px;top:356px;width:279px;height:18px;background:linear-gradient(90deg,#0a246a,#a6caf0);"></div>
<div class="t" style="left:90px;top:359px;line-height:13px;font-size:11px;font-weight:bold;color:#fff;letter-spacing:0.3px;">Select Grid Fields</div>
<div style="left:350px;top:358px;width:16px;height:14px;background:#d4d0c8;box-shadow:inset -1px -1px #404040,inset 1px 1px #fff,inset -2px -2px #808080;"></div>
<svg style="left:350px;top:358px" width="16" height="14" viewBox="0 0 16 14"><path d="M4.5 3.5 L11.5 10.5 M11.5 3.5 L4.5 10.5" stroke="#000" stroke-width="1.6"/></svg>
<div style="left:100px;top:386px;width:258px;height:284px;background:#fff;box-shadow:inset 1px 1px #808080,inset -1px -1px #fff,inset 2px 2px #404040,inset -2px -2px #d4d0c8;"></div>
<div style="left:105px;top:390px;width:11px;height:11px;background:#fff;border:1px solid #808080;"></div>
<svg style="left:105px;top:390px" width="11" height="11" viewBox="0 0 11 11"><path d="M2 4.5 L4.3 7.5 L9 2" stroke="#000" stroke-width="2" fill="none"/></svg>
<div class="t" style="left:121px;top:391px;line-height:13px;font-size:11px;">Track</div>
<div style="left:105px;top:407px;width:11px;height:11px;background:#fff;border:1px solid #808080;"></div>
<div class="t" style="left:121px;top:408px;line-height:13px;font-size:11px;">Latitude</div>
<div style="left:105px;top:424px;width:11px;height:11px;background:#fff;border:1px solid #808080;"></div>
<div class="t" style="left:121px;top:425px;line-height:13px;font-size:11px;">Longitude</div>
<div style="left:105px;top:441px;width:11px;height:11px;background:#fff;border:1px solid #808080;"></div>
<svg style="left:105px;top:441px" width="11" height="11" viewBox="0 0 11 11"><path d="M2 4.5 L4.3 7.5 L9 2" stroke="#000" stroke-width="2" fill="none"/></svg>
<div class="t" style="left:121px;top:442px;line-height:13px;font-size:11px;">Date</div>
<div style="left:105px;top:458px;width:11px;height:11px;background:#fff;border:1px solid #808080;"></div>
<svg style="left:105px;top:458px" width="11" height="11" viewBox="0 0 11 11"><path d="M2 4.5 L4.3 7.5 L9 2" stroke="#000" stroke-width="2" fill="none"/></svg>
<div class="t" style="left:121px;top:459px;line-height:13px;font-size:11px;">Time</div>
<div style="left:105px;top:475px;width:11px;height:11px;background:#fff;border:1px solid #808080;"></div>
<svg style="left:105px;top:475px" width="11" height="11" viewBox="0 0 11 11"><path d="M2 4.5 L4.3 7.5 L9 2" stroke="#000" stroke-width="2" fill="none"/></svg>
<div class="t" style="left:121px;top:476px;line-height:13px;font-size:11px;">Seconds</div>
<div style="left:105px;top:492px;width:11px;height:11px;background:#fff;border:1px solid #808080;"></div>
<svg style="left:105px;top:492px" width="11" height="11" viewBox="0 0 11 11"><path d="M2 4.5 L4.3 7.5 L9 2" stroke="#000" stroke-width="2" fill="none"/></svg>
<div class="t" style="left:121px;top:493px;line-height:13px;font-size:11px;">Distance</div>
<div style="left:105px;top:509px;width:11px;height:11px;background:#fff;border:1px solid #808080;"></div>
<svg style="left:105px;top:509px" width="11" height="11" viewBox="0 0 11 11"><path d="M2 4.5 L4.3 7.5 L9 2" stroke="#000" stroke-width="2" fill="none"/></svg>
<div class="t" style="left:121px;top:510px;line-height:13px;font-size:11px;">Speed</div>
<div style="left:105px;top:526px;width:11px;height:11px;background:#fff;border:1px solid #808080;"></div>
<svg style="left:105px;top:526px" width="11" height="11" viewBox="0 0 11 11"><path d="M2 4.5 L4.3 7.5 L9 2" stroke="#000" stroke-width="2" fill="none"/></svg>
<div class="t" style="left:121px;top:527px;line-height:13px;font-size:11px;">Direction</div>
<div style="left:105px;top:543px;width:11px;height:11px;background:#fff;border:1px solid #808080;"></div>
<div class="t" style="left:121px;top:544px;line-height:13px;font-size:11px;">Wind Angle</div>
<div style="left:105px;top:560px;width:11px;height:11px;background:#fff;border:1px solid #808080;"></div>
<svg style="left:105px;top:560px" width="11" height="11" viewBox="0 0 11 11"><path d="M2 4.5 L4.3 7.5 L9 2" stroke="#000" stroke-width="2" fill="none"/></svg>
<div class="t" style="left:121px;top:561px;line-height:13px;font-size:11px;">Altitude</div>
<div style="left:105px;top:577px;width:11px;height:11px;background:#fff;border:1px solid #808080;"></div>
<svg style="left:105px;top:577px" width="11" height="11" viewBox="0 0 11 11"><path d="M2 4.5 L4.3 7.5 L9 2" stroke="#000" stroke-width="2" fill="none"/></svg>
<div class="t" style="left:121px;top:578px;line-height:13px;font-size:11px;">HDOP</div>
<div style="left:105px;top:594px;width:11px;height:11px;background:#fff;border:1px solid #808080;"></div>
<svg style="left:105px;top:594px" width="11" height="11" viewBox="0 0 11 11"><path d="M2 4.5 L4.3 7.5 L9 2" stroke="#000" stroke-width="2" fill="none"/></svg>
<div class="t" style="left:121px;top:595px;line-height:13px;font-size:11px;">Invalid</div>
<div style="left:105px;top:611px;width:11px;height:11px;background:#fff;border:1px solid #808080;"></div>
<svg style="left:105px;top:611px" width="11" height="11" viewBox="0 0 11 11"><path d="M2 4.5 L4.3 7.5 L9 2" stroke="#000" stroke-width="2" fill="none"/></svg>
<div class="t" style="left:121px;top:612px;line-height:13px;font-size:11px;">Sats</div>
<div style="left:105px;top:628px;width:11px;height:11px;background:#fff;border:1px solid #808080;"></div>
<svg style="left:105px;top:628px" width="11" height="11" viewBox="0 0 11 11"><path d="M2 4.5 L4.3 7.5 L9 2" stroke="#000" stroke-width="2" fill="none"/></svg>
<div class="t" style="left:121px;top:629px;line-height:13px;font-size:11px;">Doppler</div>
<div style="left:210px;top:390px;width:11px;height:11px;background:#fff;border:1px solid #808080;"></div>
<svg style="left:210px;top:390px" width="11" height="11" viewBox="0 0 11 11"><path d="M2 4.5 L4.3 7.5 L9 2" stroke="#000" stroke-width="2" fill="none"/></svg>
<div class="t" style="left:226px;top:391px;line-height:13px;font-size:11px;">Doppler 3D</div>
<div style="left:210px;top:407px;width:11px;height:11px;background:#fff;border:1px solid #808080;"></div>
<div class="t" style="left:226px;top:408px;line-height:13px;font-size:11px;">Vertical Speed</div>
<div style="left:210px;top:424px;width:11px;height:11px;background:#fff;border:1px solid #808080;"></div>
<svg style="left:210px;top:424px" width="11" height="11" viewBox="0 0 11 11"><path d="M2 4.5 L4.3 7.5 L9 2" stroke="#000" stroke-width="2" fill="none"/></svg>
<div class="t" style="left:226px;top:425px;line-height:13px;font-size:11px;">Total Dist</div>
<div style="left:210px;top:441px;width:11px;height:11px;background:#fff;border:1px solid #808080;"></div>
<svg style="left:210px;top:441px" width="11" height="11" viewBox="0 0 11 11"><path d="M2 4.5 L4.3 7.5 L9 2" stroke="#000" stroke-width="2" fill="none"/></svg>
<div class="t" style="left:226px;top:442px;line-height:13px;font-size:11px;">Tot Dop Dist</div>
<div style="left:210px;top:458px;width:11px;height:11px;background:#fff;border:1px solid #808080;"></div>
<div class="t" style="left:226px;top:459px;line-height:13px;font-size:11px;">Tot Dop Dist 3D</div>
<div style="left:210px;top:475px;width:11px;height:11px;background:#fff;border:1px solid #808080;"></div>
<div class="t" style="left:226px;top:476px;line-height:13px;font-size:11px;">Run</div>
<div style="left:210px;top:492px;width:11px;height:11px;background:#fff;border:1px solid #808080;"></div>
<div class="t" style="left:226px;top:493px;line-height:13px;font-size:11px;">Doppler Run</div>
<div style="left:210px;top:509px;width:11px;height:11px;background:#fff;border:1px solid #808080;"></div>
<div class="t" style="left:226px;top:510px;line-height:13px;font-size:11px;">Pos Err</div>
<div style="left:210px;top:526px;width:11px;height:11px;background:#fff;border:1px solid #808080;"></div>
<div class="t" style="left:226px;top:527px;line-height:13px;font-size:11px;">Doppler Error</div>
<div style="left:210px;top:543px;width:11px;height:11px;background:#fff;border:1px solid #808080;"></div>
<div class="t" style="left:226px;top:544px;line-height:13px;font-size:11px;">USOG</div>
<div style="left:210px;top:560px;width:11px;height:11px;background:#fff;border:1px solid #808080;"></div>
<div class="t" style="left:226px;top:561px;line-height:13px;font-size:11px;">UCOG</div>
<div style="left:210px;top:577px;width:11px;height:11px;background:#fff;border:1px solid #808080;"></div>
<svg style="left:210px;top:577px" width="11" height="11" viewBox="0 0 11 11"><path d="M2 4.5 L4.3 7.5 L9 2" stroke="#000" stroke-width="2" fill="none"/></svg>
<div class="t" style="left:226px;top:578px;line-height:13px;font-size:11px;">SDOP</div>
<div style="left:210px;top:594px;width:11px;height:11px;background:#fff;border:1px solid #808080;"></div>
<div class="t" style="left:226px;top:595px;line-height:13px;font-size:11px;">VSDOP</div>
<div style="left:145px;top:685px;width:75px;height:23px;background:#d4d0c8;box-shadow:inset 1px 1px #000,inset -1px -1px #000,inset 2px 2px #fff,inset -2px -2px #404040,inset -3px -3px #808080;"></div>
<div class="t" style="left:145px;top:690px;width:75px;text-align:center;line-height:13px">OK</div>
<div style="left:238px;top:685px;width:75px;height:23px;background:#d4d0c8;box-shadow:inset -1px -1px #404040,inset 1px 1px #fff,inset -2px -2px #808080;"></div>
<div class="t" style="left:238px;top:690px;width:75px;text-align:center;line-height:13px">Cancel</div>
</body></html>
